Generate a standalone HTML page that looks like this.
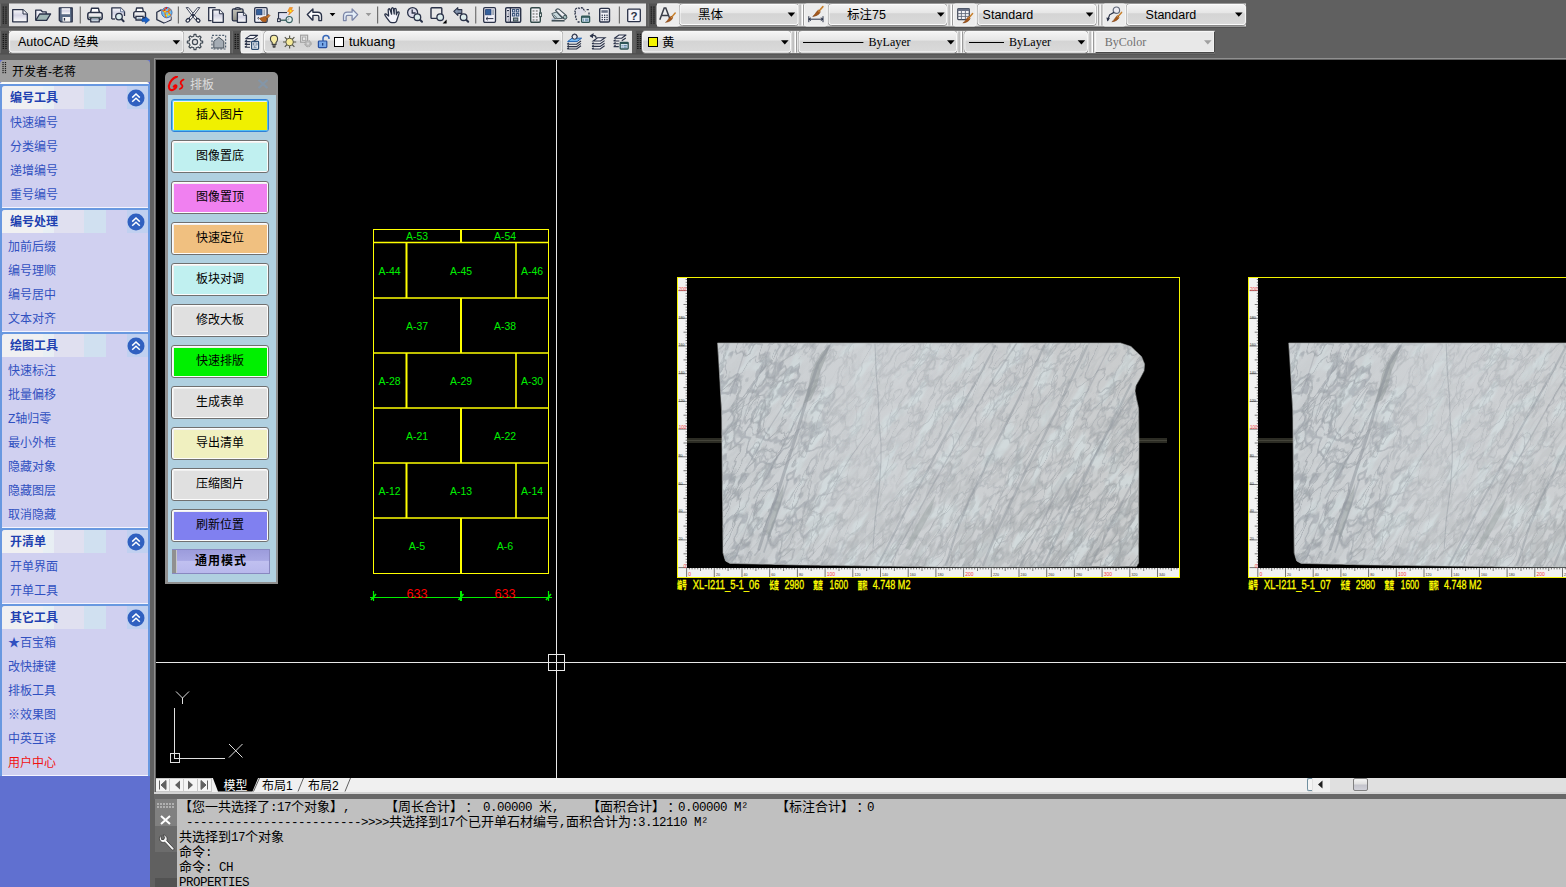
<!DOCTYPE html><html><head><meta charset="utf-8"><title>AutoCAD</title><style>
*{box-sizing:border-box;margin:0;padding:0}
html,body{width:1566px;height:887px;overflow:hidden}
body{background:#606060;font-family:"Liberation Sans","Noto Sans CJK SC",sans-serif;font-size:12px;color:#000;position:relative}
.abs{position:absolute}
#draw{position:absolute;left:156px;top:60px;width:1410px;height:718px;background:#000;overflow:hidden}
#lp{position:absolute;left:0;top:60px;width:150px;height:827px;background:#6070d0}
#lpt{position:absolute;left:0;top:0;width:150px;height:22px;background:#a0a0a0;border-radius:4px 4px 0 0}
#lpw{position:absolute;left:0;top:22px;width:149px;height:2px;background:#fcfcf8;border-radius:3px 3px 0 0}
#lpf{position:absolute;left:0;top:24px;width:150px;height:692px;background:#6898e0}
.grp{position:absolute;left:2px;width:146px;background:#d0d0f0;border-bottom:1px solid #f4f4ff;border-radius:3px 0 0 0;overflow:hidden}
.gh{position:absolute;left:0;top:0;width:146px;height:23px;background:linear-gradient(90deg,#f0f0f2 0,#f0f0f2 28%,#e8f0f4 28%,#e8eef4 35.5%,#e0e0f0 35.5%,#e0e0f0 56.5%,#d0e0f0 56.5%,#d0e0f0 71.5%,#d0d0f0 71.5%,#d0d0f0 85.6%,#c0d0f0 85.6%);}
.gt{position:absolute;left:8px;top:4px;font-weight:bold;color:#2040b0;font-size:12px;line-height:16px;letter-spacing:0}
.it{position:absolute;color:#3050c0;font-size:12px;line-height:16px;white-space:nowrap}
.chev{position:absolute;left:124.5px;top:2.5px;width:18px;height:18px}
</style></head><body>
<div id="lp"><div id="lpt"></div><div id="lpw"></div><div id="lpf"></div>
<svg class="abs" style="left:2px;top:2px" width="5" height="13" viewBox="0 0 5 13"><rect x="0.4" y="0" width="1.3" height="1.2" fill="#202020"/><rect x="0.4" y="2" width="1.3" height="1.2" fill="#202020"/><rect x="0.4" y="4" width="1.3" height="1.2" fill="#202020"/><rect x="0.4" y="6" width="1.3" height="1.2" fill="#202020"/><rect x="0.4" y="8" width="1.3" height="1.2" fill="#202020"/><rect x="0.4" y="10" width="1.3" height="1.2" fill="#202020"/><rect x="2.8" y="0" width="1.3" height="1.2" fill="#202020"/><rect x="2.8" y="2" width="1.3" height="1.2" fill="#202020"/><rect x="2.8" y="4" width="1.3" height="1.2" fill="#202020"/><rect x="2.8" y="6" width="1.3" height="1.2" fill="#202020"/><rect x="2.8" y="8" width="1.3" height="1.2" fill="#202020"/><rect x="2.8" y="10" width="1.3" height="1.2" fill="#202020"/></svg>
<div class="abs" style="left:12px;top:4px;font-size:12px;line-height:16px;color:#000">开发者-老蒋</div>
<div class="grp" style="top:26px;height:122px"><div class="gh"></div><div class="gt">编号工具</div><svg class="chev" viewBox="0 0 18 18"><circle cx="9" cy="9" r="8.5" fill="#3060c0"/><path d="M5.2 8.6 L9 5 L12.8 8.6 M5.2 12.8 L9 9.2 L12.8 12.8" fill="none" stroke="#fff" stroke-width="1.5"/></svg>
<div class="it" style="left:8px;top:29px">快速编号</div>
<div class="it" style="left:8px;top:53px">分类编号</div>
<div class="it" style="left:8px;top:77px">递增编号</div>
<div class="it" style="left:8px;top:101px">重号编号</div>
</div>
<div class="grp" style="top:150px;height:122px"><div class="gh"></div><div class="gt">编号处理</div><svg class="chev" viewBox="0 0 18 18"><circle cx="9" cy="9" r="8.5" fill="#3060c0"/><path d="M5.2 8.6 L9 5 L12.8 8.6 M5.2 12.8 L9 9.2 L12.8 12.8" fill="none" stroke="#fff" stroke-width="1.5"/></svg>
<div class="it" style="left:6px;top:29px">加前后缀</div>
<div class="it" style="left:6px;top:53px">编号理顺</div>
<div class="it" style="left:6px;top:77px">编号居中</div>
<div class="it" style="left:6px;top:101px">文本对齐</div>
</div>
<div class="grp" style="top:274px;height:194px"><div class="gh"></div><div class="gt">绘图工具</div><svg class="chev" viewBox="0 0 18 18"><circle cx="9" cy="9" r="8.5" fill="#3060c0"/><path d="M5.2 8.6 L9 5 L12.8 8.6 M5.2 12.8 L9 9.2 L12.8 12.8" fill="none" stroke="#fff" stroke-width="1.5"/></svg>
<div class="it" style="left:6px;top:29px">快速标注</div>
<div class="it" style="left:6px;top:53px">批量偏移</div>
<div class="it" style="left:6px;top:77px">Z轴归零</div>
<div class="it" style="left:6px;top:101px">最小外框</div>
<div class="it" style="left:6px;top:125px">隐藏对象</div>
<div class="it" style="left:6px;top:149px">隐藏图层</div>
<div class="it" style="left:6px;top:173px">取消隐藏</div>
</div>
<div class="grp" style="top:470px;height:74px"><div class="gh"></div><div class="gt">开清单</div><svg class="chev" viewBox="0 0 18 18"><circle cx="9" cy="9" r="8.5" fill="#3060c0"/><path d="M5.2 8.6 L9 5 L12.8 8.6 M5.2 12.8 L9 9.2 L12.8 12.8" fill="none" stroke="#fff" stroke-width="1.5"/></svg>
<div class="it" style="left:8px;top:29px">开单界面</div>
<div class="it" style="left:8px;top:53px">开单工具</div>
</div>
<div class="grp" style="top:546px;height:170px"><div class="gh"></div><div class="gt">其它工具</div><svg class="chev" viewBox="0 0 18 18"><circle cx="9" cy="9" r="8.5" fill="#3060c0"/><path d="M5.2 8.6 L9 5 L12.8 8.6 M5.2 12.8 L9 9.2 L12.8 12.8" fill="none" stroke="#fff" stroke-width="1.5"/></svg>
<div class="it" style="left:6px;top:29px">★百宝箱</div>
<div class="it" style="left:6px;top:53px">改快捷键</div>
<div class="it" style="left:6px;top:77px">排板工具</div>
<div class="it" style="left:6px;top:101px">※效果图</div>
<div class="it" style="left:6px;top:125px">中英互译</div>
<div class="it" style="left:6px;top:149px;color:#f01010">用户中心</div>
</div>
</div>
<div class="abs" style="left:154px;top:58px;width:1412px;height:1px;background:#909090"></div>
<div class="abs" style="left:154px;top:58px;width:1px;height:736px;background:#909090"></div>
<div id="draw">
<svg class="abs" style="left:0;top:0" width="1410" height="718" viewBox="156 60 1410 718" shape-rendering="crispEdges" font-family="'Liberation Sans','Noto Sans CJK SC',sans-serif">
<g shape-rendering="auto"><rect x="373.5" y="229.5" width="175.0" height="344.0" fill="none" stroke="#ffff00" stroke-width="1"/><line x1="373.5" y1="242.5" x2="548.5" y2="242.5" stroke="#ffff00" stroke-width="1.4"/><line x1="373.5" y1="298" x2="548.5" y2="298" stroke="#ffff00" stroke-width="1.4"/><line x1="373.5" y1="353" x2="548.5" y2="353" stroke="#ffff00" stroke-width="1.4"/><line x1="373.5" y1="408" x2="548.5" y2="408" stroke="#ffff00" stroke-width="1.4"/><line x1="373.5" y1="463" x2="548.5" y2="463" stroke="#ffff00" stroke-width="1.4"/><line x1="373.5" y1="518" x2="548.5" y2="518" stroke="#ffff00" stroke-width="1.4"/><line x1="461" y1="229.5" x2="461" y2="242.5" stroke="#ffff00" stroke-width="2"/><line x1="406.5" y1="242.5" x2="406.5" y2="298" stroke="#ffff00" stroke-width="2"/><line x1="516" y1="242.5" x2="516" y2="298" stroke="#ffff00" stroke-width="1.6"/><line x1="461" y1="298" x2="461" y2="353" stroke="#ffff00" stroke-width="2"/><line x1="406.5" y1="353" x2="406.5" y2="408" stroke="#ffff00" stroke-width="2"/><line x1="516" y1="353" x2="516" y2="408" stroke="#ffff00" stroke-width="1.6"/><line x1="461" y1="408" x2="461" y2="463" stroke="#ffff00" stroke-width="2"/><line x1="406.5" y1="463" x2="406.5" y2="518" stroke="#ffff00" stroke-width="2"/><line x1="516" y1="463" x2="516" y2="518" stroke="#ffff00" stroke-width="1.6"/><line x1="461" y1="518" x2="461" y2="573.5" stroke="#ffff00" stroke-width="2"/></g>
<text x="417" y="240" fill="#00f000" font-size="11" text-anchor="middle" textLength="22.0" lengthAdjust="spacingAndGlyphs">A-53</text>
<text x="505" y="240" fill="#00f000" font-size="11" text-anchor="middle" textLength="22.0" lengthAdjust="spacingAndGlyphs">A-54</text>
<text x="389.5" y="274.5" fill="#00f000" font-size="11" text-anchor="middle" textLength="22.0" lengthAdjust="spacingAndGlyphs">A-44</text>
<text x="461" y="274.5" fill="#00f000" font-size="11" text-anchor="middle" textLength="22.0" lengthAdjust="spacingAndGlyphs">A-45</text>
<text x="532" y="274.5" fill="#00f000" font-size="11" text-anchor="middle" textLength="22.0" lengthAdjust="spacingAndGlyphs">A-46</text>
<text x="417" y="330" fill="#00f000" font-size="11" text-anchor="middle" textLength="22.0" lengthAdjust="spacingAndGlyphs">A-37</text>
<text x="505" y="330" fill="#00f000" font-size="11" text-anchor="middle" textLength="22.0" lengthAdjust="spacingAndGlyphs">A-38</text>
<text x="389.5" y="385" fill="#00f000" font-size="11" text-anchor="middle" textLength="22.0" lengthAdjust="spacingAndGlyphs">A-28</text>
<text x="461" y="385" fill="#00f000" font-size="11" text-anchor="middle" textLength="22.0" lengthAdjust="spacingAndGlyphs">A-29</text>
<text x="532" y="385" fill="#00f000" font-size="11" text-anchor="middle" textLength="22.0" lengthAdjust="spacingAndGlyphs">A-30</text>
<text x="417" y="440" fill="#00f000" font-size="11" text-anchor="middle" textLength="22.0" lengthAdjust="spacingAndGlyphs">A-21</text>
<text x="505" y="440" fill="#00f000" font-size="11" text-anchor="middle" textLength="22.0" lengthAdjust="spacingAndGlyphs">A-22</text>
<text x="389.5" y="495" fill="#00f000" font-size="11" text-anchor="middle" textLength="22.0" lengthAdjust="spacingAndGlyphs">A-12</text>
<text x="461" y="495" fill="#00f000" font-size="11" text-anchor="middle" textLength="22.0" lengthAdjust="spacingAndGlyphs">A-13</text>
<text x="532" y="495" fill="#00f000" font-size="11" text-anchor="middle" textLength="22.0" lengthAdjust="spacingAndGlyphs">A-14</text>
<text x="417" y="550" fill="#00f000" font-size="11" text-anchor="middle" textLength="16.5" lengthAdjust="spacingAndGlyphs">A-5</text>
<text x="505" y="550" fill="#00f000" font-size="11" text-anchor="middle" textLength="16.5" lengthAdjust="spacingAndGlyphs">A-6</text>
<g shape-rendering="auto" stroke="#00f000" fill="none" stroke-width="1.2"><line x1="370" y1="597.5" x2="552" y2="597.5" shape-rendering="crispEdges" stroke-width="1"/><line x1="373.5" y1="591" x2="373.5" y2="601"/><line x1="548.5" y1="591" x2="548.5" y2="601"/><path d="M371 600 L376 594 M546 600 L551 594 M458.5 600 L463.5 594" stroke-width="1.6"/><line x1="461" y1="591" x2="461" y2="601" stroke-width="2"/></g>
<text x="417" y="598" fill="#ff0000" font-size="13" text-anchor="middle" textLength="21" lengthAdjust="spacingAndGlyphs">633</text>
<text x="505" y="598" fill="#ff0000" font-size="13" text-anchor="middle" textLength="21" lengthAdjust="spacingAndGlyphs">633</text>
<g stroke="#e8e8e8" stroke-width="1" fill="none"><line x1="556.5" y1="60" x2="556.5" y2="778"/><line x1="156" y1="662.5" x2="1566" y2="662.5"/><rect x="548.5" y="654.5" width="16" height="16"/></g>
<g stroke="#e0e0e0" stroke-width="1" fill="none"><line x1="174.5" y1="708" x2="174.5" y2="758"/><line x1="174" y1="758.5" x2="225" y2="758.5"/><rect x="170.5" y="753.5" width="9" height="9"/><g shape-rendering="auto"><path d="M176 691.5 L182.5 698 L189 691.5 M182.5 698 L182.5 704"/><path d="M229 744 L242.5 757.5 M242.5 744 L229 757.5"/></g></g>
<defs>
<clipPath id="slabclip"><polygon points="717.5,343 1120.5,343 1131,346.5 1141.5,356.5 1144.6,364 1144,371 1140,378.5 1136,385.5 1135,391 1136.5,399 1138.6,408 1139,440 1138.6,563 1136.5,566.6 1000,567.2 940,567 800,565 730,563.4 725.5,561 723,553 722,450 721.6,412 719.6,375"/></clipPath>
<filter id="fcrack" x="0" y="0" width="100%" height="100%" color-interpolation-filters="sRGB"><feTurbulence type="fractalNoise" baseFrequency="0.022 0.06" numOctaves="4" seed="4"/><feColorMatrix type="matrix" values="0 0 0 0 0.573  0 0 0 0 0.596  0 0 0 0 0.620  1 0 0 0 0"/><feComponentTransfer><feFuncA type="table" tableValues="0 0 0 0 0 0 0 0 0 0 0 0.85 0 0 0 0 0 0 0 0 0 0 0 0"/></feComponentTransfer></filter>
<filter id="fcrack2" x="0" y="0" width="100%" height="100%" color-interpolation-filters="sRGB"><feTurbulence type="fractalNoise" baseFrequency="0.028 0.075" numOctaves="4" seed="9"/><feColorMatrix type="matrix" values="0 0 0 0 0.588  0 0 0 0 0.616  0 0 0 0 0.639  1 0 0 0 0"/><feComponentTransfer><feFuncA type="table" tableValues="0 0 0 0 0 0 0 0 0 0 0.75 0 0 0 0 0 0 0 0 0 0 0 0 0"/></feComponentTransfer></filter>
<filter id="fcrack3" x="0" y="0" width="100%" height="100%" color-interpolation-filters="sRGB"><feTurbulence type="fractalNoise" baseFrequency="0.03 0.06" numOctaves="3" seed="33"/><feColorMatrix type="matrix" values="0 0 0 0 0.620  0 0 0 0 0.643  0 0 0 0 0.667  1 0 0 0 0"/><feComponentTransfer><feFuncA type="table" tableValues="0 0 0 0 0 0 0 0 0 0 0 0 0 0.7 0.7 0 0 0 0 0 0 0 0 0"/></feComponentTransfer></filter>
<filter id="fband" x="0" y="0" width="100%" height="100%" color-interpolation-filters="sRGB"><feTurbulence type="fractalNoise" baseFrequency="0.022 0.075" numOctaves="3" seed="3"/><feColorMatrix type="matrix" values="0 0 0 0 0.675  0 0 0 0 0.690  0 0 0 0 0.698  1 0 0 0 0"/><feComponentTransfer><feFuncA type="table" tableValues="0 0 0 0 0 0 0 0 0 0 0 0 0.2 0.6 0.6 0.55 0.2 0 0 0 0 0 0 0"/></feComponentTransfer></filter>
<filter id="fband2" x="0" y="0" width="100%" height="100%" color-interpolation-filters="sRGB"><feTurbulence type="fractalNoise" baseFrequency="0.028 0.095" numOctaves="3" seed="21"/><feColorMatrix type="matrix" values="0 0 0 0 0.580  0 0 0 0 0.600  0 0 0 0 0.612  1 0 0 0 0"/><feComponentTransfer><feFuncA type="table" tableValues="0 0 0 0 0 0 0 0 0 0.6 0.5 0 0 0 0 0 0 0 0 0 0 0 0"/></feComponentTransfer></filter>
<filter id="flight" x="0" y="0" width="100%" height="100%" color-interpolation-filters="sRGB"><feTurbulence type="fractalNoise" baseFrequency="0.024 0.07" numOctaves="3" seed="15"/><feColorMatrix type="matrix" values="0 0 0 0 0.839  0 0 0 0 0.886  0 0 0 0 0.894  1 0 0 0 0"/><feComponentTransfer><feFuncA type="table" tableValues="0 0 0 0 0 0 0 0.2 0.5 0.6 0.6 0.6 0.6"/></feComponentTransfer></filter>
<linearGradient id="dens3" x1="0" y1="0" x2="1" y2="0"><stop offset="0" stop-color="#fff" stop-opacity="0.9"/><stop offset="0.22" stop-color="#fff" stop-opacity="0.8"/><stop offset="0.36" stop-color="#fff" stop-opacity="0.1"/><stop offset="1" stop-color="#fff" stop-opacity="0"/></linearGradient>
<mask id="densm3" maskUnits="userSpaceOnUse" x="700" y="330" width="460" height="250"><rect x="700" y="330" width="460" height="250" fill="url(#dens3)"/></mask>
<linearGradient id="dens" x1="0.15" y1="0" x2="0.9" y2="1"><stop offset="0" stop-color="#fff" stop-opacity="0.06"/><stop offset="0.4" stop-color="#fff" stop-opacity="0.14"/><stop offset="0.65" stop-color="#fff" stop-opacity="0.5"/><stop offset="1" stop-color="#fff" stop-opacity="0.95"/></linearGradient>
<mask id="densm" maskUnits="userSpaceOnUse" x="700" y="330" width="460" height="250"><rect x="700" y="330" width="460" height="250" fill="url(#dens)"/></mask>
<linearGradient id="dens2" x1="0" y1="0" x2="1" y2="0"><stop offset="0" stop-color="#fff" stop-opacity="0.75"/><stop offset="0.2" stop-color="#fff" stop-opacity="0.6"/><stop offset="0.32" stop-color="#fff" stop-opacity="0.25"/><stop offset="0.5" stop-color="#fff" stop-opacity="0.4"/><stop offset="1" stop-color="#fff" stop-opacity="0.6"/></linearGradient>
<mask id="densm2" maskUnits="userSpaceOnUse" x="700" y="330" width="460" height="250"><rect x="700" y="330" width="460" height="250" fill="url(#dens2)"/></mask>
<linearGradient id="slabg" x1="0" y1="0" x2="1" y2="0"><stop offset="0" stop-color="#ccd0d3"/><stop offset="0.45" stop-color="#ced1d4"/><stop offset="1" stop-color="#cacccd"/></linearGradient>
</defs>
<g id="slab1">
<rect x="678" y="278" width="9" height="290" fill="#f2f2f2"/>
<rect x="678" y="568" width="501.5" height="9.5" fill="#f2f2f2"/>
<path d="M678.5 567.6 H687 M685.6 564.8 H687 M685.6 562.1 H687 M685.6 559.3 H687 M685.6 556.5 H687 M683.5 553.8 H687 M685.6 551.0 H687 M685.6 548.2 H687 M685.6 545.4 H687 M685.6 542.7 H687 M678.5 539.9 H687 M685.6 537.1 H687 M685.6 534.4 H687 M685.6 531.6 H687 M685.6 528.8 H687 M683.5 526.1 H687 M685.6 523.3 H687 M685.6 520.5 H687 M685.6 517.7 H687 M685.6 515.0 H687 M678.5 512.2 H687 M685.6 509.4 H687 M685.6 506.7 H687 M685.6 503.9 H687 M685.6 501.1 H687 M683.5 498.4 H687 M685.6 495.6 H687 M685.6 492.8 H687 M685.6 490.0 H687 M685.6 487.3 H687 M678.5 484.5 H687 M685.6 481.7 H687 M685.6 479.0 H687 M685.6 476.2 H687 M685.6 473.4 H687 M683.5 470.7 H687 M685.6 467.9 H687 M685.6 465.1 H687 M685.6 462.3 H687 M685.6 459.6 H687 M678.5 456.8 H687 M685.6 454.0 H687 M685.6 451.3 H687 M685.6 448.5 H687 M685.6 445.7 H687 M683.5 443.0 H687 M685.6 440.2 H687 M685.6 437.4 H687 M685.6 434.6 H687 M685.6 431.9 H687 M678.5 429.1 H687 M685.6 426.3 H687 M685.6 423.6 H687 M685.6 420.8 H687 M685.6 418.0 H687 M683.5 415.2 H687 M685.6 412.5 H687 M685.6 409.7 H687 M685.6 406.9 H687 M685.6 404.2 H687 M678.5 401.4 H687 M685.6 398.6 H687 M685.6 395.9 H687 M685.6 393.1 H687 M685.6 390.3 H687 M683.5 387.6 H687 M685.6 384.8 H687 M685.6 382.0 H687 M685.6 379.2 H687 M685.6 376.5 H687 M678.5 373.7 H687 M685.6 370.9 H687 M685.6 368.2 H687 M685.6 365.4 H687 M685.6 362.6 H687 M683.5 359.9 H687 M685.6 357.1 H687 M685.6 354.3 H687 M685.6 351.5 H687 M685.6 348.8 H687 M678.5 346.0 H687 M685.6 343.2 H687 M685.6 340.5 H687 M685.6 337.7 H687 M685.6 334.9 H687 M683.5 332.2 H687 M685.6 329.4 H687 M685.6 326.6 H687 M685.6 323.8 H687 M685.6 321.1 H687 M678.5 318.3 H687 M685.6 315.5 H687 M685.6 312.8 H687 M685.6 310.0 H687 M685.6 307.2 H687 M683.5 304.5 H687 M685.6 301.7 H687 M685.6 298.9 H687 M685.6 296.1 H687 M685.6 293.4 H687 M678.5 290.6 H687 M685.6 287.8 H687 M685.6 285.1 H687 M685.6 282.3 H687 M685.6 279.5 H687 M686.6 568 V577 M689.4 568 V569.4 M692.1 568 V569.4 M694.9 568 V569.4 M697.7 568 V569.4 M700.5 568 V571 M703.2 568 V569.4 M706.0 568 V569.4 M708.8 568 V569.4 M711.5 568 V569.4 M714.3 568 V577 M717.1 568 V569.4 M719.8 568 V569.4 M722.6 568 V569.4 M725.4 568 V569.4 M728.1 568 V571 M730.9 568 V569.4 M733.7 568 V569.4 M736.5 568 V569.4 M739.2 568 V569.4 M742.0 568 V577 M744.8 568 V569.4 M747.5 568 V569.4 M750.3 568 V569.4 M753.1 568 V569.4 M755.9 568 V571 M758.6 568 V569.4 M761.4 568 V569.4 M764.2 568 V569.4 M766.9 568 V569.4 M769.7 568 V577 M772.5 568 V569.4 M775.2 568 V569.4 M778.0 568 V569.4 M780.8 568 V569.4 M783.6 568 V571 M786.3 568 V569.4 M789.1 568 V569.4 M791.9 568 V569.4 M794.6 568 V569.4 M797.4 568 V577 M800.2 568 V569.4 M802.9 568 V569.4 M805.7 568 V569.4 M808.5 568 V569.4 M811.2 568 V571 M814.0 568 V569.4 M816.8 568 V569.4 M819.6 568 V569.4 M822.3 568 V569.4 M825.1 568 V577 M827.9 568 V569.4 M830.6 568 V569.4 M833.4 568 V569.4 M836.2 568 V569.4 M839.0 568 V571 M841.7 568 V569.4 M844.5 568 V569.4 M847.3 568 V569.4 M850.0 568 V569.4 M852.8 568 V577 M855.6 568 V569.4 M858.3 568 V569.4 M861.1 568 V569.4 M863.9 568 V569.4 M866.7 568 V571 M869.4 568 V569.4 M872.2 568 V569.4 M875.0 568 V569.4 M877.7 568 V569.4 M880.5 568 V577 M883.3 568 V569.4 M886.0 568 V569.4 M888.8 568 V569.4 M891.6 568 V569.4 M894.4 568 V571 M897.1 568 V569.4 M899.9 568 V569.4 M902.7 568 V569.4 M905.4 568 V569.4 M908.2 568 V577 M911.0 568 V569.4 M913.7 568 V569.4 M916.5 568 V569.4 M919.3 568 V569.4 M922.0 568 V571 M924.8 568 V569.4 M927.6 568 V569.4 M930.4 568 V569.4 M933.1 568 V569.4 M935.9 568 V577 M938.7 568 V569.4 M941.4 568 V569.4 M944.2 568 V569.4 M947.0 568 V569.4 M949.8 568 V571 M952.5 568 V569.4 M955.3 568 V569.4 M958.1 568 V569.4 M960.8 568 V569.4 M963.6 568 V577 M966.4 568 V569.4 M969.1 568 V569.4 M971.9 568 V569.4 M974.7 568 V569.4 M977.5 568 V571 M980.2 568 V569.4 M983.0 568 V569.4 M985.8 568 V569.4 M988.5 568 V569.4 M991.3 568 V577 M994.1 568 V569.4 M996.8 568 V569.4 M999.6 568 V569.4 M1002.4 568 V569.4 M1005.2 568 V571 M1007.9 568 V569.4 M1010.7 568 V569.4 M1013.5 568 V569.4 M1016.2 568 V569.4 M1019.0 568 V577 M1021.8 568 V569.4 M1024.5 568 V569.4 M1027.3 568 V569.4 M1030.1 568 V569.4 M1032.8 568 V571 M1035.6 568 V569.4 M1038.4 568 V569.4 M1041.2 568 V569.4 M1043.9 568 V569.4 M1046.7 568 V577 M1049.5 568 V569.4 M1052.2 568 V569.4 M1055.0 568 V569.4 M1057.8 568 V569.4 M1060.5 568 V571 M1063.3 568 V569.4 M1066.1 568 V569.4 M1068.9 568 V569.4 M1071.6 568 V569.4 M1074.4 568 V577 M1077.2 568 V569.4 M1079.9 568 V569.4 M1082.7 568 V569.4 M1085.5 568 V569.4 M1088.2 568 V571 M1091.0 568 V569.4 M1093.8 568 V569.4 M1096.6 568 V569.4 M1099.3 568 V569.4 M1102.1 568 V577 M1104.9 568 V569.4 M1107.6 568 V569.4 M1110.4 568 V569.4 M1113.2 568 V569.4 M1116.0 568 V571 M1118.7 568 V569.4 M1121.5 568 V569.4 M1124.3 568 V569.4 M1127.0 568 V569.4 M1129.8 568 V577 M1132.6 568 V569.4 M1135.3 568 V569.4 M1138.1 568 V569.4 M1140.9 568 V569.4 M1143.7 568 V571 M1146.4 568 V569.4 M1149.2 568 V569.4 M1152.0 568 V569.4 M1154.7 568 V569.4 M1157.5 568 V577 M1160.3 568 V569.4 M1163.0 568 V569.4 M1165.8 568 V569.4 M1168.6 568 V569.4 M1171.3 568 V571 M1174.1 568 V569.4 M1176.9 568 V569.4" stroke="#404040" stroke-width="0.7" fill="none" shape-rendering="auto"/>
<text x="688.2" y="576.4" font-size="5" fill="#f04040">0</text>
<text x="715.9" y="576.4" font-size="3.6" fill="#303030">20</text>
<text x="743.6" y="576.4" font-size="3.6" fill="#303030">40</text>
<text x="771.3" y="576.4" font-size="3.6" fill="#303030">60</text>
<text x="799.0" y="576.4" font-size="3.6" fill="#303030">80</text>
<text x="826.7" y="576.4" font-size="5" fill="#f04040">100</text>
<text x="854.4" y="576.4" font-size="3.6" fill="#303030">120</text>
<text x="882.1" y="576.4" font-size="3.6" fill="#303030">140</text>
<text x="909.8" y="576.4" font-size="3.6" fill="#303030">160</text>
<text x="937.5" y="576.4" font-size="3.6" fill="#303030">180</text>
<text x="965.2" y="576.4" font-size="5" fill="#f04040">200</text>
<text x="992.9" y="576.4" font-size="3.6" fill="#303030">220</text>
<text x="1020.6" y="576.4" font-size="3.6" fill="#303030">240</text>
<text x="1048.3" y="576.4" font-size="3.6" fill="#303030">260</text>
<text x="1076.0" y="576.4" font-size="3.6" fill="#303030">280</text>
<text x="1103.7" y="576.4" font-size="5" fill="#f04040">300</text>
<text x="1131.4" y="576.4" font-size="3.6" fill="#303030">320</text>
<text x="1159.1" y="576.4" font-size="3.6" fill="#303030">340</text>
<text x="686.4" y="567.8" text-anchor="end" font-size="5" fill="#f04040" textLength="2.8" lengthAdjust="spacingAndGlyphs">0</text>
<text x="678.6" y="540.1" font-size="3.6" fill="#303030">20</text>
<text x="678.6" y="512.4" font-size="3.6" fill="#303030">40</text>
<text x="678.6" y="484.7" font-size="3.6" fill="#303030">60</text>
<text x="678.6" y="457.0" font-size="3.6" fill="#303030">80</text>
<text x="686.4" y="429.3" text-anchor="end" font-size="5" fill="#f04040" textLength="7.6" lengthAdjust="spacingAndGlyphs">100</text>
<text x="678.6" y="401.6" font-size="3.6" fill="#303030">120</text>
<text x="678.6" y="373.9" font-size="3.6" fill="#303030">140</text>
<text x="678.6" y="346.2" font-size="3.6" fill="#303030">160</text>
<text x="678.6" y="318.5" font-size="3.6" fill="#303030">180</text>
<text x="686.4" y="290.8" text-anchor="end" font-size="5" fill="#f04040" textLength="7.6" lengthAdjust="spacingAndGlyphs">200</text>
<rect x="687" y="438" width="480" height="5.4" fill="#2c2c24"/><rect x="687" y="439.6" width="480" height="1.4" fill="#44443a"/>
<g clip-path="url(#slabclip)" shape-rendering="auto">
<polygon points="717.5,343 1120.5,343 1131,346.5 1141.5,356.5 1144.6,364 1144,371 1140,378.5 1136,385.5 1135,391 1136.5,399 1138.6,408 1139,440 1138.6,563 1136.5,566.6 1000,567.2 940,567 800,565 730,563.4 725.5,561 723,553 722,450 721.6,412 719.6,375" fill="url(#slabg)"/>
<g transform="rotate(-55 930 455)"><rect x="500" y="0" width="900" height="900" filter="url(#flight)"/></g>
<g mask="url(#densm2)"><g transform="rotate(-54 930 455)"><rect x="500" y="0" width="900" height="900" filter="url(#fcrack)"/></g><g transform="rotate(-60 930 455)"><rect x="500" y="0" width="900" height="900" filter="url(#fcrack2)"/></g></g>
<g mask="url(#densm3)"><g transform="rotate(-58 930 455)"><rect x="500" y="0" width="900" height="900" filter="url(#fcrack3)"/></g></g>
<g mask="url(#densm)"><g transform="rotate(-54 930 455)"><rect x="500" y="0" width="900" height="900" filter="url(#fband)"/></g><g transform="rotate(-57 930 455)"><rect x="500" y="0" width="900" height="900" filter="url(#fband2)"/></g></g>
<path d="M803 404 L808 388 L811 374 L816 362 L822 352 L829 346 L826 358 L820 372 L817 386 L811 400 Z" fill="#959d9d" opacity="0.55"/>
<path d="M766 532 L772 514 L778 497 L784 484 L782 500 L776 518 L770 536 Z" fill="#9aa2a2" opacity="0.5"/>
<path d="M905 548 L915 528 L928 506 L936 494 L931 512 L920 532 L910 550 Z" fill="#9aa2a2" opacity="0.45"/>
<path d="M759 549 L768 521 L777 495 L786 467 L795 439 L803 412 L810 388 L818 364 L829 346" fill="none" stroke="#8a9098" stroke-width="3.0" opacity="0.5" stroke-linecap="round" stroke-linejoin="round"/>
<path d="M764 552 L772 528 L779 508 L788 480" fill="none" stroke="#8a9098" stroke-width="1.8" opacity="0.38" stroke-linecap="round" stroke-linejoin="round"/>
<path d="M873 548 L875 520 L879 490 L881 462 L881 444 L879 420 L878 395 L876 370 L875 344" fill="none" stroke="#8a9098" stroke-width="1.1" opacity="0.4" stroke-linecap="round" stroke-linejoin="round"/>
<path d="M891 562 L906 535 L922 505 L940 472 L958 440 L975 410 L994 378 L1016 344" fill="none" stroke="#8a9098" stroke-width="1.5" opacity="0.36" stroke-linecap="round" stroke-linejoin="round"/>
<path d="M1044 346 L1030 376 L1014 408 L998 440 L984 470 L970 498 L957 530 L946 565" fill="none" stroke="#8a9098" stroke-width="2.2" opacity="0.4" stroke-linecap="round" stroke-linejoin="round"/>
<path d="M1087 346 L1072 378 L1058 408 L1042 440 L1030 462 L1012 500 L996 534 L983 565" fill="none" stroke="#8a9098" stroke-width="2.4" opacity="0.4" stroke-linecap="round" stroke-linejoin="round"/>
<path d="M1131 384 L1118 410 L1104 438 L1092 462 L1078 492 L1064 522 L1044 565" fill="none" stroke="#8a9098" stroke-width="2.2" opacity="0.4" stroke-linecap="round" stroke-linejoin="round"/>
<path d="M995 346 L978 378 L960 410 L942 442 L928 470 L910 502 L894 534 L878 565" fill="none" stroke="#8a9098" stroke-width="2.0" opacity="0.38" stroke-linecap="round" stroke-linejoin="round"/>
<path d="M1110 346 L1096 374 L1084 398" fill="none" stroke="#8a9098" stroke-width="1.4" opacity="0.32" stroke-linecap="round" stroke-linejoin="round"/>
<path d="M1060 520 L1080 482 L1100 446 L1120 412 L1136 392" fill="none" stroke="#8a9098" stroke-width="1.6" opacity="0.34" stroke-linecap="round" stroke-linejoin="round"/>
<path d="M1020 566 L1036 534 L1050 506 L1066 478" fill="none" stroke="#8a9098" stroke-width="1.8" opacity="0.36" stroke-linecap="round" stroke-linejoin="round"/>
<path d="M1090 566 L1104 538 L1118 510 L1134 480" fill="none" stroke="#8a9098" stroke-width="1.8" opacity="0.36" stroke-linecap="round" stroke-linejoin="round"/>
<path d="M804 404 L792 428 L780 452 L766 478 L754 498" fill="none" stroke="#8a9098" stroke-width="1.6" opacity="0.36" stroke-linecap="round" stroke-linejoin="round"/>
<path d="M745 350 L738 372 L730 396" fill="none" stroke="#8a9098" stroke-width="1.2" opacity="0.3" stroke-linecap="round" stroke-linejoin="round"/>
<path d="M770 346 L760 372 L750 400 L742 424" fill="none" stroke="#8a9098" stroke-width="1.2" opacity="0.3" stroke-linecap="round" stroke-linejoin="round"/>
<path d="M745 470 L756 452 L768 430 L782 408 L796 388" fill="none" stroke="#8a9098" stroke-width="1.2" opacity="0.33" stroke-linecap="round" stroke-linejoin="round"/>
<path d="M728 420 L740 402 L752 384 L766 366" fill="none" stroke="#8a9098" stroke-width="1.0" opacity="0.33" stroke-linecap="round" stroke-linejoin="round"/>
<path d="M735 560 L742 540 L750 518 L757 500" fill="none" stroke="#8a9098" stroke-width="1.0" opacity="0.3" stroke-linecap="round" stroke-linejoin="round"/>
<path d="M824 500 L838 478 L852 455 L870 430" fill="none" stroke="#8a9098" stroke-width="1.0" opacity="0.3" stroke-linecap="round" stroke-linejoin="round"/>
</g>
<polygon points="717.5,343 1120.5,343 1131,346.5 1141.5,356.5 1144.6,364 1144,371 1140,378.5 1136,385.5 1135,391 1136.5,399 1138.6,408 1139,440 1138.6,563 1136.5,566.6 1000,567.2 940,567 800,565 730,563.4 725.5,561 723,553 722,450 721.6,412 719.6,375" fill="none" stroke="#a8acac" stroke-width="1" opacity="0.6" shape-rendering="auto"/>
<rect x="677.5" y="277.5" width="502" height="300" fill="none" stroke="#f4f400" stroke-width="1"/>
</g>
<use href="#slab1" x="571.2" y="0"/>
<g shape-rendering="auto"><text x="677.2" y="588.6" font-size="10" fill="#fcfc00" stroke="#fcfc00" stroke-width="0.3" lengthAdjust="spacingAndGlyphs" font-weight="bold" textLength="9.5">编号</text><text x="692.8000000000001" y="589.2" font-size="13" fill="#fcfc00" stroke="#fcfc00" stroke-width="0.35" lengthAdjust="spacingAndGlyphs" textLength="66.6">XL-I211_5-1_06</text><text x="769.2" y="588.6" font-size="10" fill="#fcfc00" stroke="#fcfc00" stroke-width="0.3" lengthAdjust="spacingAndGlyphs" font-weight="bold" textLength="9.5">长度</text><text x="784.6" y="589.2" font-size="13" fill="#fcfc00" stroke="#fcfc00" stroke-width="0.35" lengthAdjust="spacingAndGlyphs" textLength="19.4">2980</text><text x="813.2" y="588.6" font-size="10" fill="#fcfc00" stroke="#fcfc00" stroke-width="0.3" lengthAdjust="spacingAndGlyphs" font-weight="bold" textLength="9.5">宽度</text><text x="829.6" y="589.2" font-size="13" fill="#fcfc00" stroke="#fcfc00" stroke-width="0.35" lengthAdjust="spacingAndGlyphs" textLength="18.4">1600</text><text x="857.8000000000001" y="588.6" font-size="10" fill="#fcfc00" stroke="#fcfc00" stroke-width="0.3" lengthAdjust="spacingAndGlyphs" font-weight="bold" textLength="9.5">面积</text><text x="872.8000000000001" y="589.2" font-size="13" fill="#fcfc00" stroke="#fcfc00" stroke-width="0.35" lengthAdjust="spacingAndGlyphs" textLength="37.6">4.748 M2</text><text x="1248.4" y="588.6" font-size="10" fill="#fcfc00" stroke="#fcfc00" stroke-width="0.3" lengthAdjust="spacingAndGlyphs" font-weight="bold" textLength="9.5">编号</text><text x="1264.0" y="589.2" font-size="13" fill="#fcfc00" stroke="#fcfc00" stroke-width="0.35" lengthAdjust="spacingAndGlyphs" textLength="66.6">XL-I211_5-1_07</text><text x="1340.4" y="588.6" font-size="10" fill="#fcfc00" stroke="#fcfc00" stroke-width="0.3" lengthAdjust="spacingAndGlyphs" font-weight="bold" textLength="9.5">长度</text><text x="1355.8000000000002" y="589.2" font-size="13" fill="#fcfc00" stroke="#fcfc00" stroke-width="0.35" lengthAdjust="spacingAndGlyphs" textLength="19.4">2980</text><text x="1384.4" y="588.6" font-size="10" fill="#fcfc00" stroke="#fcfc00" stroke-width="0.3" lengthAdjust="spacingAndGlyphs" font-weight="bold" textLength="9.5">宽度</text><text x="1400.8000000000002" y="589.2" font-size="13" fill="#fcfc00" stroke="#fcfc00" stroke-width="0.35" lengthAdjust="spacingAndGlyphs" textLength="18.4">1600</text><text x="1429.0" y="588.6" font-size="10" fill="#fcfc00" stroke="#fcfc00" stroke-width="0.3" lengthAdjust="spacingAndGlyphs" font-weight="bold" textLength="9.5">面积</text><text x="1444.0" y="589.2" font-size="13" fill="#fcfc00" stroke="#fcfc00" stroke-width="0.35" lengthAdjust="spacingAndGlyphs" textLength="37.6">4.748 M2</text></g>
</svg>
</div>
<div class="abs" style="left:165px;top:72px;width:113px;height:512px;background:#909090;border-radius:5px 5px 0 0"></div>
<div class="abs" style="left:167.5px;top:95px;width:108px;height:486.5px;background:#b0d0e0"></div>
<svg class="abs" style="left:167px;top:76px" width="20" height="16" viewBox="0 0 20 16"><path d="M10 0.6 C6.4 1.4 2.4 5.6 1.9 9.8 C1.6 13.4 4 15 6.4 13.6 C8.6 12.4 9.9 10.6 9.2 9.6 C8.6 8.9 7.4 9.6 6.8 10.6" fill="none" stroke="#f00000" stroke-width="2.1" stroke-linecap="round"/><path d="M16.6 3.6 C15 4.4 13.3 6.2 13.7 7.4 C14.1 8.6 15.7 9 15.5 10.4 C15.3 11.8 14 12.6 12.8 13" fill="none" stroke="#f00000" stroke-width="1.7" stroke-linecap="round"/></svg>
<div class="abs" style="left:190px;top:77px;font-size:12px;line-height:16px;color:#dcdcdc">排板</div>
<svg class="abs" style="left:257px;top:79px" width="12" height="10" viewBox="0 0 12 10"><path d="M1.5 1 L10.5 9 M10.5 1 L1.5 9" stroke="#8496a8" stroke-width="2.2" fill="none"/></svg>
<div class="abs" style="left:171px;top:99px;width:98px;height:33px;border-radius:3px;background:#f0f0f0;border:1px solid #3080d8;box-shadow:inset 0 0 0 1px #50c0f0"><div class="abs" style="left:1.5px;top:1.5px;right:1.5px;bottom:1.5px;background:#f0f000;text-align:center;font-size:12px;line-height:27px;color:#000">插入图片</div></div>
<div class="abs" style="left:171px;top:140px;width:98px;height:33px;border-radius:3px;background:#f0f0f0;border:1px solid #707070;box-shadow:inset 0 0 0 1px #fcfcfc"><div class="abs" style="left:1.5px;top:1.5px;right:1.5px;bottom:1.5px;background:#c0f0f0;text-align:center;font-size:12px;line-height:27px;color:#000">图像置底</div></div>
<div class="abs" style="left:171px;top:181px;width:98px;height:33px;border-radius:3px;background:#f0f0f0;border:1px solid #707070;box-shadow:inset 0 0 0 1px #fcfcfc"><div class="abs" style="left:1.5px;top:1.5px;right:1.5px;bottom:1.5px;background:#f080f0;text-align:center;font-size:12px;line-height:27px;color:#000">图像置顶</div></div>
<div class="abs" style="left:171px;top:222px;width:98px;height:33px;border-radius:3px;background:#f0f0f0;border:1px solid #707070;box-shadow:inset 0 0 0 1px #fcfcfc"><div class="abs" style="left:1.5px;top:1.5px;right:1.5px;bottom:1.5px;background:#f0c080;text-align:center;font-size:12px;line-height:27px;color:#000">快速定位</div></div>
<div class="abs" style="left:171px;top:263px;width:98px;height:33px;border-radius:3px;background:#f0f0f0;border:1px solid #707070;box-shadow:inset 0 0 0 1px #fcfcfc"><div class="abs" style="left:1.5px;top:1.5px;right:1.5px;bottom:1.5px;background:#c0f0f0;text-align:center;font-size:12px;line-height:27px;color:#000">板块对调</div></div>
<div class="abs" style="left:171px;top:304px;width:98px;height:33px;border-radius:3px;background:#f0f0f0;border:1px solid #707070;box-shadow:inset 0 0 0 1px #fcfcfc"><div class="abs" style="left:1.5px;top:1.5px;right:1.5px;bottom:1.5px;background:#e0e0e0;text-align:center;font-size:12px;line-height:27px;color:#000">修改大板</div></div>
<div class="abs" style="left:171px;top:345px;width:98px;height:33px;border-radius:3px;background:#f0f0f0;border:1px solid #707070;box-shadow:inset 0 0 0 1px #fcfcfc"><div class="abs" style="left:1.5px;top:1.5px;right:1.5px;bottom:1.5px;background:#00f000;text-align:center;font-size:12px;line-height:27px;color:#000">快速排版</div></div>
<div class="abs" style="left:171px;top:386px;width:98px;height:33px;border-radius:3px;background:#f0f0f0;border:1px solid #707070;box-shadow:inset 0 0 0 1px #fcfcfc"><div class="abs" style="left:1.5px;top:1.5px;right:1.5px;bottom:1.5px;background:#e0e0e0;text-align:center;font-size:12px;line-height:27px;color:#000">生成表单</div></div>
<div class="abs" style="left:171px;top:427px;width:98px;height:33px;border-radius:3px;background:#f0f0f0;border:1px solid #707070;box-shadow:inset 0 0 0 1px #fcfcfc"><div class="abs" style="left:1.5px;top:1.5px;right:1.5px;bottom:1.5px;background:#f0f0c0;text-align:center;font-size:12px;line-height:27px;color:#000">导出清单</div></div>
<div class="abs" style="left:171px;top:468px;width:98px;height:33px;border-radius:3px;background:#f0f0f0;border:1px solid #707070;box-shadow:inset 0 0 0 1px #fcfcfc"><div class="abs" style="left:1.5px;top:1.5px;right:1.5px;bottom:1.5px;background:#e0e0e0;text-align:center;font-size:12px;line-height:27px;color:#000">压缩图片</div></div>
<div class="abs" style="left:171px;top:509px;width:98px;height:33px;border-radius:3px;background:#f0f0f0;border:1px solid #707070;box-shadow:inset 0 0 0 1px #fcfcfc"><div class="abs" style="left:1.5px;top:1.5px;right:1.5px;bottom:1.5px;background:#8080f0;text-align:center;font-size:12px;line-height:27px;color:#000">刷新位置</div></div>
<div class="abs" style="left:172px;top:549px;width:98px;height:25px;background:linear-gradient(180deg,#9c9cdc 0,#a8a8e4 45%,#c0c0f0 50%,#b8b8ec 100%);border:1px solid #8888c0;text-align:center;font-weight:bold;font-size:12px;line-height:22px;letter-spacing:1px;color:#000">通用模式</div>
<div class="abs" style="left:172px;top:550px;width:5px;height:23px;background:#909090;border-right:1px solid #c8c8c8"></div>
<div class="abs" style="left:156px;top:778px;width:1410px;height:14px;background:#f0f0f0"></div>
<div class="abs" style="left:154px;top:792px;width:1412px;height:2px;background:#d4d4d4"></div>
<div class="abs" style="left:154px;top:794px;width:1412px;height:5px;background:#686868"></div>
<svg class="abs" style="left:156px;top:777px" width="200" height="15" viewBox="156 777 200 15"><rect x="155.5" y="778.5" width="14" height="13" fill="#f4f4f4" stroke="#c8c8c8"/><rect x="169.5" y="778.5" width="14" height="13" fill="#f4f4f4" stroke="#c8c8c8"/><rect x="183.5" y="778.5" width="14" height="13" fill="#f4f4f4" stroke="#c8c8c8"/><rect x="197.5" y="778.5" width="14" height="13" fill="#f4f4f4" stroke="#c8c8c8"/><path d="M159.5 780.5 V789.5 M166 780.5 L161 785 L166 789.5 Z" fill="#606060" stroke="#606060" stroke-width="1"/><path d="M180 780.5 L175 785 L180 789.5 Z" fill="#606060"/><path d="M188 780.5 L193 785 L188 789.5 Z" fill="#606060"/><path d="M207.5 780.5 V789.5 M201 780.5 L206 785 L201 789.5 Z" fill="#606060" stroke="#606060" stroke-width="1"/><path d="M212.5 777 L258.5 777 L252.5 791.5 L218 791.5 Z" fill="#000"/><path d="M259.5 778 L253.5 791.5 M303.5 778 L298 791.5 M350.5 778 L345 791.5" stroke="#606060" stroke-width="1" fill="none"/></svg>
<div class="abs" style="left:223.5px;top:778px;font-size:12px;line-height:16px;color:#fff">模型</div>
<div class="abs" style="left:262px;top:778px;font-size:12px;line-height:16px;color:#000">布局1</div>
<div class="abs" style="left:308px;top:778px;font-size:12px;line-height:16px;color:#000">布局2</div>
<div class="abs" style="left:1308px;top:778px;width:258px;height:14px;background:#e0e0e0"></div>
<div class="abs" style="left:1307px;top:778px;width:5px;height:13px;border:1px solid #7090a0;border-right:none;border-radius:2px 0 0 2px;background:#f4f4f4"></div>
<div class="abs" style="left:1313px;top:778px;width:17px;height:14px;background:#f0f0f0"></div>
<svg class="abs" style="left:1317px;top:780px" width="6" height="9" viewBox="0 0 6 9"><path d="M5.5 0.5 L1 4.5 L5.5 8.5 Z" fill="#202020"/></svg>
<div class="abs" style="left:1353px;top:778px;width:15px;height:13px;border:1px solid #808080;border-radius:2px;background:linear-gradient(180deg,#f4f4f4 0,#e0e0e0 45%,#c4c4cc 55%,#d0d0d8 100%)"></div>
<style>.cl{position:absolute;left:179px;height:15px;line-height:15px;white-space:pre;font-family:"Liberation Mono","Noto Sans CJK SC",monospace;font-size:12.5px;letter-spacing:-0.5px;color:#000}.cl .cj{font-size:13px;letter-spacing:0;font-family:"Noto Sans CJK SC",sans-serif}</style>
<div class="abs" style="left:156px;top:799px;width:1410px;height:88px;background:#c0c0c0"></div>
<div class="abs" style="left:155px;top:799px;width:22px;height:88px;background:#808080"></div>
<div class="abs" style="left:155px;top:826px;width:22px;height:26px;background:#6c6c6c"></div>
<div class="abs" style="left:155px;top:852px;width:22px;height:26px;background:#606060"></div>
<div class="abs" style="left:155px;top:878px;width:22px;height:9px;background:#525252"></div>
<div class="abs" style="left:157px;top:803px;width:18px;height:5px;background:repeating-linear-gradient(90deg,#b0b0b0 0,#b0b0b0 2px,transparent 2px,transparent 3px);-webkit-mask:repeating-linear-gradient(180deg,#000 0,#000 2px,transparent 2px,transparent 3px)"></div>
<svg class="abs" style="left:160px;top:815px" width="11" height="10" viewBox="0 0 11 10"><path d="M1 1 L10 9 M10 1 L1 9" stroke="#fff" stroke-width="2" fill="none"/></svg>
<svg class="abs" style="left:156.5px;top:832.5px" width="19" height="19" viewBox="0 0 16 16"><path d="M3.2 2.2 C1.8 3.4 1.6 5.6 3 7 C4 8 5.4 8.2 6.6 7.7 L12.6 14.2 C13.4 15 14.9 13.8 14.2 12.8 L8.2 6.4 C8.8 5.2 8.6 3.6 7.6 2.6 C6.9 1.9 5.9 1.6 5 1.7 L6.4 3.6 L5.8 5.4 L3.9 5.5 Z" fill="#f8f8f8" stroke="#383838" stroke-width="0.7"/></svg>
<svg class="abs" style="left:177px;top:799px" width="1389" height="88" viewBox="177 799 1389 88" font-family="'Liberation Mono',monospace" font-size="12.5" letter-spacing="-0.5" fill="#000" style="text-spacing-trim:space-all">
<text x="179" y="811" xml:space="preserve"><tspan x="179" font-family="'Noto Sans CJK SC',sans-serif" font-size="13" letter-spacing="0">【</tspan><tspan x="192" font-family="'Noto Sans CJK SC',sans-serif" font-size="13" letter-spacing="0">您</tspan><tspan x="205" font-family="'Noto Sans CJK SC',sans-serif" font-size="13" letter-spacing="0">一</tspan><tspan x="218" font-family="'Noto Sans CJK SC',sans-serif" font-size="13" letter-spacing="0">共</tspan><tspan x="231" font-family="'Noto Sans CJK SC',sans-serif" font-size="13" letter-spacing="0">选</tspan><tspan x="244" font-family="'Noto Sans CJK SC',sans-serif" font-size="13" letter-spacing="0">择</tspan><tspan x="257" font-family="'Noto Sans CJK SC',sans-serif" font-size="13" letter-spacing="0">了</tspan><tspan x="270">:17</tspan><tspan x="291" font-family="'Noto Sans CJK SC',sans-serif" font-size="13" letter-spacing="0">个</tspan><tspan x="304" font-family="'Noto Sans CJK SC',sans-serif" font-size="13" letter-spacing="0">对</tspan><tspan x="317" font-family="'Noto Sans CJK SC',sans-serif" font-size="13" letter-spacing="0">象</tspan><tspan x="330" font-family="'Noto Sans CJK SC',sans-serif" font-size="13" letter-spacing="0">】</tspan><tspan x="343">,     </tspan><tspan x="385" font-family="'Noto Sans CJK SC',sans-serif" font-size="13" letter-spacing="0">【</tspan><tspan x="398" font-family="'Noto Sans CJK SC',sans-serif" font-size="13" letter-spacing="0">周</tspan><tspan x="411" font-family="'Noto Sans CJK SC',sans-serif" font-size="13" letter-spacing="0">长</tspan><tspan x="424" font-family="'Noto Sans CJK SC',sans-serif" font-size="13" letter-spacing="0">合</tspan><tspan x="437" font-family="'Noto Sans CJK SC',sans-serif" font-size="13" letter-spacing="0">计</tspan><tspan x="450" font-family="'Noto Sans CJK SC',sans-serif" font-size="13" letter-spacing="0">】</tspan><tspan x="465.5" font-family="'Noto Sans CJK SC',sans-serif" font-size="13" letter-spacing="0">：</tspan><tspan x="476"> 0.00000 </tspan><tspan x="539" font-family="'Noto Sans CJK SC',sans-serif" font-size="13" letter-spacing="0">米</tspan><tspan x="552">,    </tspan><tspan x="587" font-family="'Noto Sans CJK SC',sans-serif" font-size="13" letter-spacing="0">【</tspan><tspan x="600" font-family="'Noto Sans CJK SC',sans-serif" font-size="13" letter-spacing="0">面</tspan><tspan x="613" font-family="'Noto Sans CJK SC',sans-serif" font-size="13" letter-spacing="0">积</tspan><tspan x="626" font-family="'Noto Sans CJK SC',sans-serif" font-size="13" letter-spacing="0">合</tspan><tspan x="639" font-family="'Noto Sans CJK SC',sans-serif" font-size="13" letter-spacing="0">计</tspan><tspan x="652" font-family="'Noto Sans CJK SC',sans-serif" font-size="13" letter-spacing="0">】</tspan><tspan x="667.5" font-family="'Noto Sans CJK SC',sans-serif" font-size="13" letter-spacing="0">：</tspan><tspan x="678">0.00000 M²    </tspan><tspan x="776" font-family="'Noto Sans CJK SC',sans-serif" font-size="13" letter-spacing="0">【</tspan><tspan x="789" font-family="'Noto Sans CJK SC',sans-serif" font-size="13" letter-spacing="0">标</tspan><tspan x="802" font-family="'Noto Sans CJK SC',sans-serif" font-size="13" letter-spacing="0">注</tspan><tspan x="815" font-family="'Noto Sans CJK SC',sans-serif" font-size="13" letter-spacing="0">合</tspan><tspan x="828" font-family="'Noto Sans CJK SC',sans-serif" font-size="13" letter-spacing="0">计</tspan><tspan x="841" font-family="'Noto Sans CJK SC',sans-serif" font-size="13" letter-spacing="0">】</tspan><tspan x="856.5" font-family="'Noto Sans CJK SC',sans-serif" font-size="13" letter-spacing="0">：</tspan><tspan x="867">0</tspan></text>
<text x="179" y="826" xml:space="preserve"><tspan x="179"> -------------------------&gt;&gt;&gt;&gt;</tspan><tspan x="389" font-family="'Noto Sans CJK SC',sans-serif" font-size="13" letter-spacing="0">共</tspan><tspan x="402" font-family="'Noto Sans CJK SC',sans-serif" font-size="13" letter-spacing="0">选</tspan><tspan x="415" font-family="'Noto Sans CJK SC',sans-serif" font-size="13" letter-spacing="0">择</tspan><tspan x="428" font-family="'Noto Sans CJK SC',sans-serif" font-size="13" letter-spacing="0">到</tspan><tspan x="441">17</tspan><tspan x="455" font-family="'Noto Sans CJK SC',sans-serif" font-size="13" letter-spacing="0">个</tspan><tspan x="468" font-family="'Noto Sans CJK SC',sans-serif" font-size="13" letter-spacing="0">已</tspan><tspan x="481" font-family="'Noto Sans CJK SC',sans-serif" font-size="13" letter-spacing="0">开</tspan><tspan x="494" font-family="'Noto Sans CJK SC',sans-serif" font-size="13" letter-spacing="0">单</tspan><tspan x="507" font-family="'Noto Sans CJK SC',sans-serif" font-size="13" letter-spacing="0">石</tspan><tspan x="520" font-family="'Noto Sans CJK SC',sans-serif" font-size="13" letter-spacing="0">材</tspan><tspan x="533" font-family="'Noto Sans CJK SC',sans-serif" font-size="13" letter-spacing="0">编</tspan><tspan x="546" font-family="'Noto Sans CJK SC',sans-serif" font-size="13" letter-spacing="0">号</tspan><tspan x="559">,</tspan><tspan x="566" font-family="'Noto Sans CJK SC',sans-serif" font-size="13" letter-spacing="0">面</tspan><tspan x="579" font-family="'Noto Sans CJK SC',sans-serif" font-size="13" letter-spacing="0">积</tspan><tspan x="592" font-family="'Noto Sans CJK SC',sans-serif" font-size="13" letter-spacing="0">合</tspan><tspan x="605" font-family="'Noto Sans CJK SC',sans-serif" font-size="13" letter-spacing="0">计</tspan><tspan x="618" font-family="'Noto Sans CJK SC',sans-serif" font-size="13" letter-spacing="0">为</tspan><tspan x="631">:3.12110 M²</tspan></text>
<text x="179" y="841" xml:space="preserve"><tspan x="179" font-family="'Noto Sans CJK SC',sans-serif" font-size="13" letter-spacing="0">共</tspan><tspan x="192" font-family="'Noto Sans CJK SC',sans-serif" font-size="13" letter-spacing="0">选</tspan><tspan x="205" font-family="'Noto Sans CJK SC',sans-serif" font-size="13" letter-spacing="0">择</tspan><tspan x="218" font-family="'Noto Sans CJK SC',sans-serif" font-size="13" letter-spacing="0">到</tspan><tspan x="231">17</tspan><tspan x="245" font-family="'Noto Sans CJK SC',sans-serif" font-size="13" letter-spacing="0">个</tspan><tspan x="258" font-family="'Noto Sans CJK SC',sans-serif" font-size="13" letter-spacing="0">对</tspan><tspan x="271" font-family="'Noto Sans CJK SC',sans-serif" font-size="13" letter-spacing="0">象</tspan></text>
<text x="179" y="856" xml:space="preserve"><tspan x="179" font-family="'Noto Sans CJK SC',sans-serif" font-size="13" letter-spacing="0">命</tspan><tspan x="192" font-family="'Noto Sans CJK SC',sans-serif" font-size="13" letter-spacing="0">令</tspan><tspan x="205">:</tspan></text>
<text x="179" y="871" xml:space="preserve"><tspan x="179" font-family="'Noto Sans CJK SC',sans-serif" font-size="13" letter-spacing="0">命</tspan><tspan x="192" font-family="'Noto Sans CJK SC',sans-serif" font-size="13" letter-spacing="0">令</tspan><tspan x="205">: CH</tspan></text>
<text x="179" y="886" xml:space="preserve"><tspan x="179">PROPERTIES</tspan></text>
</svg>
<svg class="abs" style="left:0;top:0" width="1566" height="58" viewBox="0 0 1566 58">
<defs>
<linearGradient id="tbg" x1="0" y1="0" x2="0" y2="1"><stop offset="0" stop-color="#e8e8e8"/><stop offset="0.5" stop-color="#e4e4e4"/><stop offset="1" stop-color="#e0e0e0"/></linearGradient>
<linearGradient id="ddg" x1="0" y1="0" x2="0" y2="1"><stop offset="0" stop-color="#f4f4f4"/><stop offset="0.42" stop-color="#e6e6e6"/><stop offset="0.46" stop-color="#d4d4d4"/><stop offset="1" stop-color="#dadada"/></linearGradient>
<linearGradient id="pg" x1="0" y1="0" x2="0" y2="1"><stop offset="0" stop-color="#fafafc"/><stop offset="0.45" stop-color="#d4d4e4"/><stop offset="1" stop-color="#fcfcfc"/></linearGradient>
<linearGradient id="pg2" x1="0" y1="0" x2="0" y2="1"><stop offset="0" stop-color="#fcfcfc"/><stop offset="1" stop-color="#d0d0d4"/></linearGradient>
<linearGradient id="clipg" x1="0" y1="0" x2="0" y2="1"><stop offset="0" stop-color="#c4c4bc"/><stop offset="1" stop-color="#8c8c84"/></linearGradient>
</defs>
<rect x="0" y="3.5" width="9" height="23.0" fill="#525252"/><rect x="0" y="3.5" width="1" height="23.0" fill="#6a6a6a"/><rect x="2.6" y="6.5" width="1.5" height="1.2" fill="#181818"/><rect x="2.6" y="8.5" width="1.5" height="1.2" fill="#181818"/><rect x="2.6" y="10.5" width="1.5" height="1.2" fill="#181818"/><rect x="2.6" y="12.5" width="1.5" height="1.2" fill="#181818"/><rect x="2.6" y="14.5" width="1.5" height="1.2" fill="#181818"/><rect x="2.6" y="16.5" width="1.5" height="1.2" fill="#181818"/><rect x="2.6" y="18.5" width="1.5" height="1.2" fill="#181818"/><rect x="2.6" y="20.5" width="1.5" height="1.2" fill="#181818"/><rect x="2.6" y="22.5" width="1.5" height="1.2" fill="#181818"/><rect x="5.2" y="6.5" width="1.5" height="1.2" fill="#181818"/><rect x="5.2" y="8.5" width="1.5" height="1.2" fill="#181818"/><rect x="5.2" y="10.5" width="1.5" height="1.2" fill="#181818"/><rect x="5.2" y="12.5" width="1.5" height="1.2" fill="#181818"/><rect x="5.2" y="14.5" width="1.5" height="1.2" fill="#181818"/><rect x="5.2" y="16.5" width="1.5" height="1.2" fill="#181818"/><rect x="5.2" y="18.5" width="1.5" height="1.2" fill="#181818"/><rect x="5.2" y="20.5" width="1.5" height="1.2" fill="#181818"/><rect x="5.2" y="22.5" width="1.5" height="1.2" fill="#181818"/><rect x="9" y="3.5" width="637" height="23.0" fill="url(#tbg)"/>
<rect x="0" y="26.5" width="1246" height="1.2" fill="#4c4c4c"/>
<rect x="0" y="53.2" width="1215" height="1.2" fill="#4c4c4c"/>
<g transform="translate(12,7)"><path d="M0.7 2.7 H11 L15.3 7 V14.8 H0.7 Z" fill="url(#pg)" stroke="#2a3248" stroke-width="1.3" stroke-linejoin="round"/><path d="M11 2.7 V7 H15.3" fill="#f4f4fa" stroke="#2a3248" stroke-width="1"/></g>
<g transform="translate(35,7)"><path d="M0.7 13 V3.2 H6 L7.4 4.8 H11.2 V7" fill="#ececf4" stroke="#2a3248" stroke-width="1.3" stroke-linejoin="round"/><path d="M0.8 13.3 L4.6 7 H15.6 L11.6 13.3 Z" fill="#9fb6b4" stroke="#2a3248" stroke-width="1.3" stroke-linejoin="round"/></g>
<g transform="translate(58.6,7)"><path d="M0.7 0.8 H13.6 V14.8 H2.2 L0.7 13.3 Z" fill="#586a84" stroke="#2a3248" stroke-width="1.3" stroke-linejoin="round"/><rect x="3" y="1.2" width="8.4" height="6" fill="url(#pg)"/><rect x="4" y="10" width="7.5" height="4.6" fill="#f4f4f4"/><rect x="5.2" y="11" width="1.3" height="2.6" fill="#2a3248"/></g>
<line x1="80.3" y1="6.5" x2="80.3" y2="23.5" stroke="#707070" stroke-width="1.2"/>
<g transform="translate(87,7)"><path d="M3.6 5.5 L4.6 1.2 H11.4 L12.4 5.5" fill="#fff" stroke="#2a3248" stroke-width="1.4" stroke-linejoin="round"/><rect x="0.8" y="5.4" width="14.4" height="7.2" rx="2.2" fill="url(#pg2)" stroke="#2a3248" stroke-width="1.5"/><path d="M3.8 10.8 H12.2 V14.9 H3.8 Z" fill="#fff" stroke="#2a3248" stroke-width="1.4" stroke-linejoin="round"/><rect x="5" y="12.2" width="6" height="1.3" fill="#8aa4ba"/><line x1="2" y1="10.3" x2="14" y2="10.3" stroke="#405858" stroke-width="1"/></g>
<g transform="translate(111,7)"><path d="M0.8 12 V0.8 H9.5 L13.5 4.8 V9" fill="url(#pg)" stroke="#2a3248" stroke-width="1.3" stroke-linejoin="round"/><path d="M0.8 12 H4" stroke="#2a3248" stroke-width="1.3"/><path d="M9.5 0.8 V4.8 H13.5" fill="#e8ecf4" stroke="#7080a0" stroke-width="1"/><line x1="10.309999999999999" y1="11.91" x2="12.61" y2="14.21" stroke="#2a3248" stroke-width="2" stroke-linecap="round"/><circle cx="8" cy="9.6" r="3.3" fill="#dcecec" stroke="#2a3248" stroke-width="1.3"/></g>
<g transform="translate(133,7)"><path d="M2.8 4.8 L3.6 1 H9.6 L10.4 4.8" fill="#fff" stroke="#2a3248" stroke-width="1.3" stroke-linejoin="round"/><rect x="0.7" y="4.6" width="11.8" height="6.4" rx="1.8" fill="url(#pg2)" stroke="#2a3248" stroke-width="1.4"/><path d="M3 9.4 H10 V13 H3 Z" fill="#fff" stroke="#2a3248" stroke-width="1.3"/><rect x="4.3" y="10.6" width="4" height="1.2" fill="#8aa4ba"/><path d="M9 11.4 H12.4 V9.4 L16.6 13 L12.4 16.6 V14.6 H9 Z" fill="#1560c8" stroke="#0a3c90" stroke-width="0.6"/></g>
<g transform="translate(156,7)"><path d="M5.6 2.6 L0.8 5.2 V12.6 L7.8 16 L15 12.8 V9.5" fill="none" stroke="#2a3248" stroke-width="1.3" stroke-linejoin="round"/><path d="M8.4 12.5 L14.6 9.8 V12.4 L8.4 15.4 Z" fill="#e4e4f0"/><circle cx="10.8" cy="5.6" r="5.2" fill="#70bce8" stroke="#3868b0" stroke-width="0.9"/><path d="M6.5 3.2 Q10.5 6.8 14.8 2.6 M9 0.8 Q8 6 10.4 10.6 M13.2 1.4 Q11.6 6.4 15 8.6" fill="none" stroke="#e07020" stroke-width="1.2"/><circle cx="9" cy="4.6" r="0.9" fill="#ffee00"/><circle cx="12.8" cy="7.6" r="0.9" fill="#ffee00"/><circle cx="10.4" cy="8.6" r="0.8" fill="#ffee00"/><circle cx="10.4" cy="1" r="0.9" fill="#f01010"/><circle cx="8.6" cy="3" r="0.8" fill="#f01010"/></g>
<line x1="178.4" y1="6.5" x2="178.4" y2="23.5" stroke="#707070" stroke-width="1.2"/>
<g transform="translate(185,7)"><path d="M1.2 0.6 L3.4 0.6 L12 11.2 L10.2 12.6 Z" fill="#fff" stroke="#2a3248" stroke-width="0.9" stroke-linejoin="round"/><path d="M14.8 0.6 L12.6 0.6 L4 11.2 L5.8 12.6 Z" fill="#fff" stroke="#2a3248" stroke-width="0.9" stroke-linejoin="round"/><circle cx="8" cy="8.2" r="1.5" fill="#2a3248"/><ellipse cx="2.9" cy="13.4" rx="2" ry="1.6" transform="rotate(-40 2.9 13.4)" fill="#fff" stroke="#2a3248" stroke-width="1.3"/><ellipse cx="13.1" cy="13.4" rx="2" ry="1.6" transform="rotate(40 13.1 13.4)" fill="#fff" stroke="#2a3248" stroke-width="1.3"/></g>
<g transform="translate(208,7)"><path d="M3.6 13.6 H0.7 V0.7 H7.6" fill="#f4f4f8" stroke="#2a3248" stroke-width="1.3"/><path d="M4.7 2.8 H11.4 L15.3 6.8 V15.3 H4.7 Z" fill="url(#pg)" stroke="#2a3248" stroke-width="1.3" stroke-linejoin="round"/><path d="M11.4 2.8 V6.8 H15.3" fill="#f8f8fc" stroke="#2a3248" stroke-width="1"/></g>
<g transform="translate(231.6,7)"><rect x="0.7" y="1.8" width="10.8" height="12" rx="1.4" fill="url(#clipg)" stroke="#2a3248" stroke-width="1.3"/><path d="M3.4 2.2 Q3.4 0.6 6 0.6 Q8.8 0.6 8.8 2.2 Z" fill="#e0e0e0" stroke="#2a3248" stroke-width="1.1"/><path d="M5.8 5.4 H11.8 L14.8 8.4 V15.3 H5.8 Z" fill="url(#pg)" stroke="#2a3248" stroke-width="1.3" stroke-linejoin="round"/><path d="M11.8 5.4 V8.4 H14.8" fill="#f8f8fc" stroke="#2a3248" stroke-width="0.9"/></g>
<g transform="translate(254,7)"><rect x="0.7" y="0.7" width="12.4" height="14.6" rx="1.2" fill="#f0f0f8" stroke="#2a3248" stroke-width="1.3"/><rect x="2.6" y="2.6" width="5.4" height="5.2" fill="#34609c" stroke="#203c70" stroke-width="0.8"/><rect x="9.4" y="2.4" width="1.8" height="5.6" fill="#a0a8b4"/><path d="M3.6 11.2 L5 10 M3.6 11.2 L5 12.4" stroke="#2a3248" stroke-width="0.9" fill="none"/><path d="M5.4 11.4 L10.6 9.4 L13.2 11.8 L11.6 15 L8.4 14.6 Z" fill="#b4601c" stroke="#7c3c0c" stroke-width="0.6"/><path d="M11.2 9.8 L14.8 7.4 L16 8.6 L13.2 11.6 Z" fill="#c87830" stroke="#7c3c0c" stroke-width="0.6"/></g>
<g transform="translate(277,7)"><path d="M1.6 12.4 V5.6 H10" fill="none" stroke="#2a3248" stroke-width="1.3"/><path d="M2.4 6.4 H11.4 V11.6 H2.4 Z" fill="#e0e0f0"/><path d="M1.6 13.2 H9.2" stroke="#305858" stroke-width="1.3"/><rect x="0.6" y="11.8" width="2.6" height="2.8" fill="#fff" stroke="#2a3248" stroke-width="1.1"/><circle cx="12.2" cy="12.6" r="3.1" fill="#e4f0f0" stroke="#386060" stroke-width="1.2"/><path d="M11.8 12.8 V10.6 M11.8 12.8 H10" stroke="#a0a8b0" stroke-width="1"/><path d="M12.6 0.4 L15.6 0.6 L14.2 3 L16.6 3.4 L11.6 8 L12.8 4.8 L10.6 4.6 Z" fill="#f8a020" stroke="#e07010" stroke-width="0.5"/><circle cx="13.6" cy="4" r="1" fill="#ffee20"/></g>
<line x1="299.4" y1="6.5" x2="299.4" y2="23.5" stroke="#707070" stroke-width="1.2"/>
<g transform="translate(306.5,7)"><path d="M0.8 7.6 L6.4 2 V5.2 H11.2 Q15 5.2 15 9 V13.6 H12.4 V10 Q12.4 8.4 10.8 8.4 H6.4 V13 H5.8 Z" fill="#fff" stroke="#2a3248" stroke-width="1.4" stroke-linejoin="round"/></g>
<g transform="translate(342.5,7)"><path d="M15.2 7.6 L9.6 2 V5.2 H4.8 Q1 5.2 1 9 V13.6 H3.6 V10 Q3.6 8.4 5.2 8.4 H9.6 V13 H10.2 Z" fill="#e4eef8" stroke="#7c86a8" stroke-width="1.3" stroke-linejoin="round"/></g>
<line x1="377.6" y1="6.5" x2="377.6" y2="23.5" stroke="#707070" stroke-width="1.2"/>
<g transform="translate(384,7)"><path d="M4.6 9 L2.4 7.2 Q1.2 6.6 0.8 7.6 Q0.8 8.6 2 9.8 L5.6 14.6 Q6.4 15.6 8 15.6 H10.4 Q12 15.6 12.6 14 L15 6.6 Q15.4 5 14.4 4.8 Q13.6 4.8 13.2 5.8 L12.4 7.8 L12.2 2.6 Q12.2 1.4 11.2 1.4 Q10.2 1.4 10.2 2.6 V7 L9.4 1.8 Q9.2 0.6 8.2 0.8 Q7.4 1 7.4 2.2 L7.6 7.2 L6 2.6 Q5.6 1.6 4.8 1.8 Q4 2.2 4.2 3.4 Z" fill="#f4f4fa" stroke="#2a3248" stroke-width="1.3" stroke-linejoin="round"/></g>
<g transform="translate(407,7)"><circle cx="5.6" cy="5.6" r="5" fill="#dcdcea" stroke="#2a3248" stroke-width="1.3"/><path d="M5.2 2.4 V6 H8.6" fill="none" stroke="#2a3248" stroke-width="1.3"/><line x1="12.71" y1="12.509999999999998" x2="15.010000000000002" y2="14.809999999999999" stroke="#2a3248" stroke-width="2" stroke-linecap="round"/><circle cx="10.4" cy="10.2" r="3.3" fill="#dcecec" stroke="#2a3248" stroke-width="1.3"/></g>
<g transform="translate(430.2,7)"><rect x="0.8" y="0.8" width="10.8" height="10.6" rx="0.8" fill="#e8e8e8" stroke="#2a3248" stroke-width="1.4"/><circle cx="10" cy="10.2" r="3.3" fill="#dcecec" stroke="#2a3248" stroke-width="1.3"/><path d="M12.4 16.4 H16.4 V12.4 Z" fill="#000"/></g>
<g transform="translate(453,7)"><path d="M0.8 4.4 L4.8 0.6 V2.6 H8.8 V6.4 H4.8 V8.4 Z" fill="#8494ac" stroke="#2a3248" stroke-width="1.1" stroke-linejoin="round"/><line x1="12.91" y1="12.509999999999998" x2="15.21" y2="14.809999999999999" stroke="#2a3248" stroke-width="2" stroke-linecap="round"/><circle cx="10.6" cy="10.2" r="3.3" fill="#dcecec" stroke="#2a3248" stroke-width="1.3"/></g>
<line x1="475.7" y1="6.5" x2="475.7" y2="23.5" stroke="#707070" stroke-width="1.2"/>
<g transform="translate(483,7)"><rect x="0.7" y="0.7" width="11.8" height="14.6" rx="1.2" fill="#f0f0f8" stroke="#2a3248" stroke-width="1.3"/><rect x="2.6" y="2.6" width="5.4" height="5.2" fill="#34609c" stroke="#203c70" stroke-width="0.8"/><rect x="9.2" y="2.4" width="1.8" height="5.6" fill="#a0a8b4"/><path d="M3 11.6 H10.4 M3 11.6 L4.8 10 M3 11.6 L4.8 13.2" stroke="#2a3248" stroke-width="1" fill="none"/></g>
<g transform="translate(505,7)"><rect x="0.7" y="0.7" width="15" height="14.6" rx="1.2" fill="#f0f0f8" stroke="#2a3248" stroke-width="1.4"/><line x1="5.4" y1="0.7" x2="5.4" y2="15.3" stroke="#2a3248" stroke-width="1.3"/><path d="M2 3.6 H4 M2 9.6 H4" stroke="#2a3248" stroke-width="1.1"/><path d="M3.2 5.6 v1 M3.2 7.4 v1 M3.2 11.6 v1 M3.2 13.4 v0.8" stroke="#2a3248" stroke-width="0.9"/><g fill="#e8e8f4" stroke="#2c4870" stroke-width="1"><rect x="7.4" y="2.6" width="2.4" height="2.4"/><rect x="11.4" y="2.6" width="2.4" height="2.4"/><rect x="7.4" y="6.6" width="2.4" height="2.4"/><rect x="11.4" y="6.6" width="2.4" height="2.4"/></g><rect x="8.4" y="11" width="4.4" height="3" fill="#9098a8" stroke="#344a4a" stroke-width="1"/></g>
<g transform="translate(530,7)"><rect x="0.7" y="0.7" width="9.6" height="14.6" rx="1.2" fill="#f0f0f4" stroke="#344a4a" stroke-width="1.4"/><rect x="9.6" y="5.8" width="1.8" height="3.8" fill="#fff" stroke="#344a4a" stroke-width="1"/><g fill="#a0a0a0"><rect x="2.6" y="3" width="1.9" height="1.9"/><rect x="5.8" y="3" width="1.9" height="1.9"/><rect x="2.6" y="6" width="1.9" height="1.9"/><rect x="5.8" y="6" width="1.9" height="1.9"/><rect x="2.6" y="9" width="1.9" height="1.9"/><rect x="5.8" y="9" width="1.9" height="1.9"/><rect x="2.6" y="12" width="1.9" height="1.9"/><rect x="5.8" y="12" width="1.9" height="1.9"/></g></g>
<g transform="translate(551,7)"><path d="M0.8 6.6 L5.4 5 L11.4 11.4 L3.6 11.8 Z" fill="#c8d8dc" stroke="#405058" stroke-width="0.9"/><path d="M4.6 3.4 Q6 1.2 8 2.2 L15.4 8.6 Q16.4 10.6 14.8 11.8 Q13.4 12.4 12.4 11.4 Z" fill="#f0f0f4" stroke="#405058" stroke-width="1.1"/><ellipse cx="14" cy="10.2" rx="1.6" ry="2" transform="rotate(-35 14 10.2)" fill="#a8c4c0" stroke="#405058" stroke-width="0.9"/><path d="M1.4 8.4 L5 11.6 M2.6 7.6 L6.4 11.2" stroke="#405058" stroke-width="0.7"/><line x1="0.6" y1="13.8" x2="13.6" y2="13.8" stroke="#304048" stroke-width="1.4"/><line x1="0.6" y1="12.2" x2="4" y2="12.2" stroke="#90a8c0" stroke-width="1"/></g>
<g transform="translate(574,7)"><path d="M1.6 5.6 Q0 3.4 2 1.8 Q3.4 0 5.6 1.4 Q7.6 0 9.4 1.6 M1.6 5.6 Q0.2 7.6 1.8 9.2 Q1 11.6 3 12.6 M3.6 15 H5.6 M9.4 1.6 Q9.8 3.6 11.4 4.6 M12.6 2.6 H14.2 V3.6 M15 5.6 V7.6" fill="none" stroke="#2a3248" stroke-width="1.3" stroke-dasharray="2.2 1"/><path d="M2 2.4 Q5.6 1 9 2.4 L10.6 5 L7 8.6 L3 8.4 Z" fill="#dcdce8" opacity="0.8"/><rect x="7.6" y="9.2" width="8" height="6.2" rx="0.8" fill="#d4e4ec" stroke="#2c5454" stroke-width="1.3"/><rect x="7.6" y="9.2" width="8" height="1.6" fill="#2c5454"/><path d="M9 12.2 h1 M11 12.2 h3.4 M9 13.8 h1 M11 13.8 h3.4" stroke="#5078a0" stroke-width="0.9"/></g>
<g transform="translate(599,7)"><rect x="0.7" y="1.4" width="9.8" height="13.6" rx="1.2" fill="#f2f2f8" stroke="#2a3248" stroke-width="1.4"/><rect x="2.4" y="3.2" width="6.4" height="2.6" fill="#6c7488"/><g fill="#2a3248"><rect x="2.6" y="7.6" width="1.3" height="1.3"/><rect x="5" y="7.6" width="1.3" height="1.3"/><rect x="7.4" y="7.6" width="1.3" height="1.3"/><rect x="2.6" y="9.8" width="1.3" height="1.3"/><rect x="5" y="9.8" width="1.3" height="1.3"/><rect x="7.4" y="9.8" width="1.3" height="1.3"/><rect x="2.6" y="12" width="1.3" height="1.3"/><rect x="5" y="12" width="1.3" height="1.3"/><rect x="7.4" y="12" width="1.3" height="1.3"/></g></g>
<line x1="619.4" y1="6.5" x2="619.4" y2="23.5" stroke="#707070" stroke-width="1.2"/>
<g transform="translate(627,7)"><rect x="0.7" y="2.2" width="12.6" height="12.4" rx="0.8" fill="#f4f4fa" stroke="#2a3248" stroke-width="1.3"/><text x="7" y="13" text-anchor="middle" font-family="'Liberation Sans',sans-serif" font-weight="bold" font-size="11.5" fill="#2a3248">?</text></g>
<path d="M329.6 13 h5.8 l-2.9 3.3 Z" fill="#000"/><path d="M365.6 13 h5.8 l-2.9 3.3 Z" fill="#9a9a9a"/>
<rect x="648" y="3.5" width="9" height="23.0" fill="#525252"/><rect x="648" y="3.5" width="1" height="23.0" fill="#6a6a6a"/><rect x="650.6" y="6.5" width="1.5" height="1.2" fill="#181818"/><rect x="650.6" y="8.5" width="1.5" height="1.2" fill="#181818"/><rect x="650.6" y="10.5" width="1.5" height="1.2" fill="#181818"/><rect x="650.6" y="12.5" width="1.5" height="1.2" fill="#181818"/><rect x="650.6" y="14.5" width="1.5" height="1.2" fill="#181818"/><rect x="650.6" y="16.5" width="1.5" height="1.2" fill="#181818"/><rect x="650.6" y="18.5" width="1.5" height="1.2" fill="#181818"/><rect x="650.6" y="20.5" width="1.5" height="1.2" fill="#181818"/><rect x="650.6" y="22.5" width="1.5" height="1.2" fill="#181818"/><rect x="653.2" y="6.5" width="1.5" height="1.2" fill="#181818"/><rect x="653.2" y="8.5" width="1.5" height="1.2" fill="#181818"/><rect x="653.2" y="10.5" width="1.5" height="1.2" fill="#181818"/><rect x="653.2" y="12.5" width="1.5" height="1.2" fill="#181818"/><rect x="653.2" y="14.5" width="1.5" height="1.2" fill="#181818"/><rect x="653.2" y="16.5" width="1.5" height="1.2" fill="#181818"/><rect x="653.2" y="18.5" width="1.5" height="1.2" fill="#181818"/><rect x="653.2" y="20.5" width="1.5" height="1.2" fill="#181818"/><rect x="653.2" y="22.5" width="1.5" height="1.2" fill="#181818"/><rect x="657" y="3.5" width="589" height="23.0" fill="url(#tbg)"/>
<rect x="657" y="4" width="22.5" height="22" rx="2" fill="#ececec" stroke="#f6f6f6" stroke-width="1"/>
<rect x="804.5" y="4" width="22.5" height="22" rx="2" fill="#ececec" stroke="#f6f6f6" stroke-width="1"/>
<rect x="953.5" y="4" width="22.5" height="22" rx="2" fill="#ececec" stroke="#f6f6f6" stroke-width="1"/>
<rect x="1103" y="4" width="22.5" height="22" rx="2" fill="#ececec" stroke="#f6f6f6" stroke-width="1"/>
<g transform="translate(659,7)"><path d="M0.8 12.8 L5.2 1 H6.8 L11.2 12.8 M2.6 8.4 H9.4" fill="none" stroke="#3a3e48" stroke-width="1.5" stroke-linejoin="miter"/><g transform="translate(6.2,5.4)"><path d="M10 0.6 L6.4 4.8" stroke="#c8802c" stroke-width="1.5" stroke-linecap="round" fill="none"/><path d="M6 3.8 L7.6 5.4 C6.8 8 3.6 9.8 0.2 10 C2.4 8.6 3.2 6.2 5 4.4 Z" fill="#a4581c" stroke="#6c340c" stroke-width="0.4"/><path d="M5.2 4.2 L7.2 6" stroke="#e0a050" stroke-width="0.8"/></g></g>
<rect x="679.5" y="4.0" width="119" height="21.5" rx="3" fill="none" stroke="#8a8a8a" stroke-width="1"/><rect x="680" y="4.5" width="118" height="20.0" rx="2.5" fill="url(#ddg)" stroke="#fcfcfc" stroke-width="1"/>
<text x="698" y="19.3" font-size="12.5" font-family="'Liberation Sans','Noto Sans CJK SC',sans-serif" fill="#000" >黑体</text>
<path d="M787.6 12.6 h7.6 l-3.8 4.2 Z" fill="#000"/>
<line x1="799" y1="4.5" x2="799" y2="25.5" stroke="#fff" stroke-width="1"/><line x1="800" y1="4.5" x2="800" y2="25.5" stroke="#9a9a9a" stroke-width="1"/><line x1="802.5" y1="4.5" x2="802.5" y2="25.5" stroke="#fff" stroke-width="1"/><line x1="803.5" y1="4.5" x2="803.5" y2="25.5" stroke="#9a9a9a" stroke-width="1"/>
<g transform="translate(808,6.6)"><path d="M0.8 9.6 V15.6 M15 9.6 V15.6 M0.8 12.6 H15 M0.8 12.6 L3 11.2 M0.8 12.6 L3 14 M15 12.6 L12.8 11.2 M15 12.6 L12.8 14" fill="none" stroke="#2a3248" stroke-width="1"/><g transform="translate(4.4,-0.6)"><g transform="scale(1.05)"><path d="M10 0.6 L6.4 4.8" stroke="#c8802c" stroke-width="1.5" stroke-linecap="round" fill="none"/><path d="M6 3.8 L7.6 5.4 C6.8 8 3.6 9.8 0.2 10 C2.4 8.6 3.2 6.2 5 4.4 Z" fill="#a4581c" stroke="#6c340c" stroke-width="0.4"/><path d="M5.2 4.2 L7.2 6" stroke="#e0a050" stroke-width="0.8"/></g></g></g>
<rect x="828.5" y="4.0" width="118.39999999999998" height="21.5" rx="3" fill="none" stroke="#8a8a8a" stroke-width="1"/><rect x="829" y="4.5" width="117.39999999999998" height="20.0" rx="2.5" fill="url(#ddg)" stroke="#fcfcfc" stroke-width="1"/>
<text x="847" y="19.3" font-size="12.5" font-family="'Liberation Sans','Noto Sans CJK SC',sans-serif" fill="#000" >标注75</text>
<path d="M937 12.6 h7.6 l-3.8 4.2 Z" fill="#000"/>
<line x1="948" y1="4.5" x2="948" y2="25.5" stroke="#fff" stroke-width="1"/><line x1="949" y1="4.5" x2="949" y2="25.5" stroke="#9a9a9a" stroke-width="1"/><line x1="951.5" y1="4.5" x2="951.5" y2="25.5" stroke="#fff" stroke-width="1"/><line x1="952.5" y1="4.5" x2="952.5" y2="25.5" stroke="#9a9a9a" stroke-width="1"/>
<g transform="translate(957,7.6)"><rect x="0.7" y="1" width="11.6" height="11" rx="0.8" fill="#f4f4f8" stroke="#404858" stroke-width="1.2"/><rect x="0.7" y="1" width="11.6" height="2.4" fill="#687084"/><path d="M0.7 6 H12.3 M0.7 8.8 H12.3 M4.4 3.4 V12 M8.4 3.4 V12" stroke="#606878" stroke-width="0.9"/><g transform="translate(5.6,5.4)"><path d="M10 0.6 L6.4 4.8" stroke="#c8802c" stroke-width="1.5" stroke-linecap="round" fill="none"/><path d="M6 3.8 L7.6 5.4 C6.8 8 3.6 9.8 0.2 10 C2.4 8.6 3.2 6.2 5 4.4 Z" fill="#a4581c" stroke="#6c340c" stroke-width="0.4"/><path d="M5.2 4.2 L7.2 6" stroke="#e0a050" stroke-width="0.8"/></g></g>
<rect x="977.5" y="4.0" width="118.59999999999991" height="21.5" rx="3" fill="none" stroke="#8a8a8a" stroke-width="1"/><rect x="978" y="4.5" width="117.59999999999991" height="20.0" rx="2.5" fill="url(#ddg)" stroke="#fcfcfc" stroke-width="1"/>
<text x="982.6" y="19.3" font-size="12.5" font-family="'Liberation Sans','Noto Sans CJK SC',sans-serif" fill="#000" >Standard</text>
<path d="M1085.8 12.6 h7.6 l-3.8 4.2 Z" fill="#000"/>
<line x1="1097.4" y1="4.5" x2="1097.4" y2="25.5" stroke="#fff" stroke-width="1"/><line x1="1098.4" y1="4.5" x2="1098.4" y2="25.5" stroke="#9a9a9a" stroke-width="1"/><line x1="1100.9" y1="4.5" x2="1100.9" y2="25.5" stroke="#fff" stroke-width="1"/><line x1="1101.9" y1="4.5" x2="1101.9" y2="25.5" stroke="#9a9a9a" stroke-width="1"/>
<g transform="translate(1106,6.6)"><circle cx="10.4" cy="3.6" r="3.2" fill="#ececf4" stroke="#606878" stroke-width="1.2"/><path d="M8 5.8 L3.6 8.2 L1.6 14" fill="none" stroke="#2a3248" stroke-width="1.2"/><path d="M0.4 10.8 L1.4 15 L4 11.6 Z" fill="#2a3248"/><g transform="translate(5.6,5.2)"><path d="M10 0.6 L6.4 4.8" stroke="#c8802c" stroke-width="1.5" stroke-linecap="round" fill="none"/><path d="M6 3.8 L7.6 5.4 C6.8 8 3.6 9.8 0.2 10 C2.4 8.6 3.2 6.2 5 4.4 Z" fill="#a4581c" stroke="#6c340c" stroke-width="0.4"/><path d="M5.2 4.2 L7.2 6" stroke="#e0a050" stroke-width="0.8"/></g></g>
<rect x="1126.5" y="4.0" width="119.40000000000009" height="21.5" rx="3" fill="none" stroke="#8a8a8a" stroke-width="1"/><rect x="1127" y="4.5" width="118.40000000000009" height="20.0" rx="2.5" fill="url(#ddg)" stroke="#fcfcfc" stroke-width="1"/>
<text x="1145.6" y="19.3" font-size="12.5" font-family="'Liberation Sans','Noto Sans CJK SC',sans-serif" fill="#000" >Standard</text>
<path d="M1235 12.6 h7.6 l-3.8 4.2 Z" fill="#000"/>
<rect x="0" y="30.8" width="9" height="22.400000000000002" fill="#525252"/><rect x="0" y="30.8" width="1" height="22.400000000000002" fill="#6a6a6a"/><rect x="2.6" y="33.8" width="1.5" height="1.2" fill="#181818"/><rect x="2.6" y="35.8" width="1.5" height="1.2" fill="#181818"/><rect x="2.6" y="37.8" width="1.5" height="1.2" fill="#181818"/><rect x="2.6" y="39.8" width="1.5" height="1.2" fill="#181818"/><rect x="2.6" y="41.8" width="1.5" height="1.2" fill="#181818"/><rect x="2.6" y="43.8" width="1.5" height="1.2" fill="#181818"/><rect x="2.6" y="45.8" width="1.5" height="1.2" fill="#181818"/><rect x="2.6" y="47.8" width="1.5" height="1.2" fill="#181818"/><rect x="5.2" y="33.8" width="1.5" height="1.2" fill="#181818"/><rect x="5.2" y="35.8" width="1.5" height="1.2" fill="#181818"/><rect x="5.2" y="37.8" width="1.5" height="1.2" fill="#181818"/><rect x="5.2" y="39.8" width="1.5" height="1.2" fill="#181818"/><rect x="5.2" y="41.8" width="1.5" height="1.2" fill="#181818"/><rect x="5.2" y="43.8" width="1.5" height="1.2" fill="#181818"/><rect x="5.2" y="45.8" width="1.5" height="1.2" fill="#181818"/><rect x="5.2" y="47.8" width="1.5" height="1.2" fill="#181818"/><rect x="9" y="30.8" width="221" height="22.400000000000002" fill="url(#tbg)"/>
<rect x="9.1" y="31.1" width="174.4" height="21.9" rx="3" fill="none" stroke="#8a8a8a" stroke-width="1"/><rect x="9.6" y="31.6" width="173.4" height="20.4" rx="2.5" fill="url(#ddg)" stroke="#fcfcfc" stroke-width="1"/>
<text x="18" y="46" font-size="12.5" font-family="'Liberation Sans','Noto Sans CJK SC',sans-serif" fill="#000" >AutoCAD 经典</text>
<path d="M172.6 40.2 h7.6 l-3.8 4.2 Z" fill="#000"/>
<g transform="translate(187,34)"><path d="M13.78 6.80 L15.64 7.03 L15.64 8.97 L13.78 9.20 L12.93 11.24 L14.08 12.72 L12.72 14.08 L11.24 12.93 L9.20 13.78 L8.97 15.64 L7.03 15.64 L6.80 13.78 L4.76 12.93 L3.28 14.08 L1.92 12.72 L3.07 11.24 L2.22 9.20 L0.36 8.97 L0.36 7.03 L2.22 6.80 L3.07 4.76 L1.92 3.28 L3.28 1.92 L4.76 3.07 L6.80 2.22 L7.03 0.36 L8.97 0.36 L9.20 2.22 L11.24 3.07 L12.72 1.92 L14.08 3.28 L12.93 4.76 Z" fill="#ececec" stroke="#404a54" stroke-width="1.2" stroke-linejoin="round"/><circle cx="8" cy="8" r="2.6" fill="#e0e0e0" stroke="#404a54" stroke-width="1.2"/></g>
<g transform="translate(210.6,34)"><rect x="1.4" y="1.4" width="13.6" height="13.6" fill="none" stroke="#506070" stroke-width="1.2" stroke-dasharray="2 1.4"/><path d="M3.2 14 V7.2 L8.2 3.2 L13.2 7.2 V14 Z" fill="#a4acb4" stroke="#48525c" stroke-width="1"/></g>
<rect x="232" y="30.8" width="9" height="22.400000000000002" fill="#525252"/><rect x="232" y="30.8" width="1" height="22.400000000000002" fill="#6a6a6a"/><rect x="234.6" y="33.8" width="1.5" height="1.2" fill="#181818"/><rect x="234.6" y="35.8" width="1.5" height="1.2" fill="#181818"/><rect x="234.6" y="37.8" width="1.5" height="1.2" fill="#181818"/><rect x="234.6" y="39.8" width="1.5" height="1.2" fill="#181818"/><rect x="234.6" y="41.8" width="1.5" height="1.2" fill="#181818"/><rect x="234.6" y="43.8" width="1.5" height="1.2" fill="#181818"/><rect x="234.6" y="45.8" width="1.5" height="1.2" fill="#181818"/><rect x="234.6" y="47.8" width="1.5" height="1.2" fill="#181818"/><rect x="237.2" y="33.8" width="1.5" height="1.2" fill="#181818"/><rect x="237.2" y="35.8" width="1.5" height="1.2" fill="#181818"/><rect x="237.2" y="37.8" width="1.5" height="1.2" fill="#181818"/><rect x="237.2" y="39.8" width="1.5" height="1.2" fill="#181818"/><rect x="237.2" y="41.8" width="1.5" height="1.2" fill="#181818"/><rect x="237.2" y="43.8" width="1.5" height="1.2" fill="#181818"/><rect x="237.2" y="45.8" width="1.5" height="1.2" fill="#181818"/><rect x="237.2" y="47.8" width="1.5" height="1.2" fill="#181818"/><rect x="241" y="30.8" width="391" height="22.400000000000002" fill="url(#tbg)"/>
<rect x="241" y="31.2" width="21" height="21.6" rx="2" fill="#ececec" stroke="#f8f8f8" stroke-width="1"/>
<g transform="translate(243.6,34)"><path d="M2 4.6 L6.6 1.4 H14 L9.6 4.6 Z M1.2 7.6 L3.4 6 M9.6 7.6 L14 4.4 M1.2 7.6 H7 M1.2 10.4 L3.4 8.8 M1.2 10.4 H6.4 M1.2 13.2 L3.4 11.6 M1.2 13.2 H6.4" fill="#f4f4f8" stroke="#2a3248" stroke-width="1.1" stroke-linejoin="round"/><rect x="8" y="7.4" width="7" height="8" rx="0.8" fill="#e4ecf4" stroke="#2c4c70" stroke-width="1.2"/><rect x="9.6" y="9" width="3.8" height="2" fill="#fff" stroke="#2c4c70" stroke-width="0.6"/><path d="M10 13.2 h1.4 l-0.6 -0.7 M13 13.2 h-1.4" stroke="#2c4c70" stroke-width="0.7" fill="none"/></g>
<rect x="264.1" y="31.1" width="298.4" height="21.9" rx="3" fill="none" stroke="#8a8a8a" stroke-width="1"/><rect x="264.6" y="31.6" width="297.4" height="20.4" rx="2.5" fill="url(#ddg)" stroke="#fcfcfc" stroke-width="1"/>
<g transform="translate(269.6,34.4)"><path d="M4.4 0.8 Q8 0.8 8 4.6 Q8 6.6 6.4 8.2 V10 H2.6 V8.2 Q0.8 6.6 0.8 4.6 Q0.8 0.8 4.4 0.8 Z" fill="#f6eca4" stroke="#404040" stroke-width="1.1"/><path d="M2.8 11.4 H6.2 M3.2 12.8 H5.8" stroke="#484848" stroke-width="1.2"/></g>
<g transform="translate(283,35.4)"><g stroke="#585848" stroke-width="1.2"><path d="M6.6 0 V13.2 M0 6.6 H13.2 M1.8 1.8 L11.4 11.4 M11.4 1.8 L1.8 11.4"/></g><circle cx="6.6" cy="6.6" r="3.8" fill="#f6ea98" stroke="#585848" stroke-width="1"/></g>
<g transform="translate(300,34.6)"><rect x="0.6" y="0.6" width="7" height="7" fill="#e8e8e8" stroke="#a0a0a0" stroke-width="1.2"/><rect x="2.4" y="2.4" width="3.4" height="3.4" fill="none" stroke="#a8a8a8" stroke-width="1"/><circle cx="8" cy="9" r="3.2" fill="#b8b8b8" stroke="#a0a0a0" stroke-width="1" stroke-dasharray="1.6 1"/><circle cx="8" cy="9" r="1.2" fill="#d8d8d8"/></g>
<g transform="translate(317.6,34.6)"><path d="M5.4 6.6 V3.6 Q5.4 0.8 8.4 0.8 Q11.4 0.8 11.4 3.6 V4.4" fill="none" stroke="#3868b8" stroke-width="1.5"/><rect x="0.8" y="6.4" width="8.4" height="6.6" rx="0.8" fill="#78a8e8" stroke="#2850a0" stroke-width="1.2"/><rect x="4.4" y="8.4" width="1.3" height="2.6" fill="#204080"/></g>
<rect x="334.5" y="37.5" width="9" height="9" fill="#fff" stroke="#000" stroke-width="1"/>
<text x="349" y="46.4" font-size="13" font-family="'Liberation Sans','Noto Sans CJK SC',sans-serif" fill="#000" >tukuang</text>
<path d="M552 40.2 h7.6 l-3.8 4.2 Z" fill="#000"/>
<g transform="translate(566,33.6)"><circle cx="8.6" cy="3" r="2.6" fill="#e8e8f0" stroke="#2a3248" stroke-width="1"/><path d="M1.6 8 L6 4.6 H15.6 L11 8 Z" fill="#78b8f0" stroke="#2060b0" stroke-width="1"/><circle cx="8.6" cy="3.2" r="2.4" fill="#e8e8f0" stroke="#2a3248" stroke-width="1"/><path d="M1.2 10.6 H10.6 L15 7.4 M1.2 13 H10.6 L15 9.8 M1.2 15.4 H10.6 L15 12.2 M1.2 10.6 L2.8 9.4 M1.2 13 L2.8 11.8 M1.2 15.4 L2.8 14.2" fill="none" stroke="#2a3248" stroke-width="1.1"/></g>
<g transform="translate(589.6,33.6)"><path d="M3.6 7.4 L8 4.2 H15.4 L11 7.4 Z M2.4 10.2 H10.6 L15 7 M2.4 12.8 H10.6 L15 9.6 M2.4 15.4 H10.6 L15 12.2 M2.4 10.2 L4 9 M2.4 12.8 L4 11.6 M2.4 15.4 L4 14.2" fill="#f4f4f8" stroke="#2a3248" stroke-width="1.1"/><path d="M0.4 2.6 L3.4 0.4 V1.8 Q6.4 1.8 6.6 4.6" fill="none" stroke="#2a3248" stroke-width="1.1"/><path d="M0.4 2.6 L3.4 0.6 V4.6 Z" fill="#2a3248"/></g>
<g transform="translate(612.4,33.6)"><path d="M2 4.6 L6.6 1.4 H13.6 L9.2 4.6 Z M1.2 7.4 L3.2 6 M1.2 7.4 H7 M9.4 7.2 L13.4 4.4 M1.2 10.2 L3.2 8.8 M1.2 10.2 H6.4 M1.2 13 L3.2 11.6 M1.2 13 H6.4" fill="#f4f4f8" stroke="#2a3248" stroke-width="1.1" stroke-linejoin="round"/><rect x="7.8" y="8.8" width="8" height="6.6" rx="0.8" fill="#d4e4ec" stroke="#2c5454" stroke-width="1.3"/><rect x="7.8" y="8.8" width="8" height="1.6" fill="#2c5454"/><path d="M9.2 12 h1 M11.2 12 h3.2 M9.2 13.6 h1 M11.2 13.6 h3.2" stroke="#5078a0" stroke-width="0.9"/></g>
<rect x="634.5" y="30.8" width="9" height="22.400000000000002" fill="#525252"/><rect x="634.5" y="30.8" width="1" height="22.400000000000002" fill="#6a6a6a"/><rect x="637.1" y="33.8" width="1.5" height="1.2" fill="#181818"/><rect x="637.1" y="35.8" width="1.5" height="1.2" fill="#181818"/><rect x="637.1" y="37.8" width="1.5" height="1.2" fill="#181818"/><rect x="637.1" y="39.8" width="1.5" height="1.2" fill="#181818"/><rect x="637.1" y="41.8" width="1.5" height="1.2" fill="#181818"/><rect x="637.1" y="43.8" width="1.5" height="1.2" fill="#181818"/><rect x="637.1" y="45.8" width="1.5" height="1.2" fill="#181818"/><rect x="637.1" y="47.8" width="1.5" height="1.2" fill="#181818"/><rect x="639.7" y="33.8" width="1.5" height="1.2" fill="#181818"/><rect x="639.7" y="35.8" width="1.5" height="1.2" fill="#181818"/><rect x="639.7" y="37.8" width="1.5" height="1.2" fill="#181818"/><rect x="639.7" y="39.8" width="1.5" height="1.2" fill="#181818"/><rect x="639.7" y="41.8" width="1.5" height="1.2" fill="#181818"/><rect x="639.7" y="43.8" width="1.5" height="1.2" fill="#181818"/><rect x="639.7" y="45.8" width="1.5" height="1.2" fill="#181818"/><rect x="639.7" y="47.8" width="1.5" height="1.2" fill="#181818"/><rect x="643.5" y="30.8" width="571.5" height="22.400000000000002" fill="url(#tbg)"/>
<rect x="642.1" y="31.1" width="149.0" height="21.9" rx="3" fill="none" stroke="#8a8a8a" stroke-width="1"/><rect x="642.6" y="31.6" width="148.0" height="20.4" rx="2.5" fill="url(#ddg)" stroke="#fcfcfc" stroke-width="1"/>
<rect x="648.5" y="37.5" width="9" height="9" fill="#f4f400" stroke="#000" stroke-width="1"/>
<text x="662" y="46.6" font-size="12.5" font-family="'Liberation Sans','Noto Sans CJK SC',sans-serif" fill="#000" >黄</text>
<path d="M781 40.2 h7.6 l-3.8 4.2 Z" fill="#000"/>
<line x1="792" y1="31.4" x2="792" y2="52.6" stroke="#fff" stroke-width="1"/><line x1="793" y1="31.4" x2="793" y2="52.6" stroke="#9a9a9a" stroke-width="1"/><line x1="795.5" y1="31.4" x2="795.5" y2="52.6" stroke="#fff" stroke-width="1"/><line x1="796.5" y1="31.4" x2="796.5" y2="52.6" stroke="#9a9a9a" stroke-width="1"/>
<rect x="798.5" y="31.1" width="158.60000000000002" height="21.9" rx="3" fill="none" stroke="#8a8a8a" stroke-width="1"/><rect x="799" y="31.6" width="157.60000000000002" height="20.4" rx="2.5" fill="url(#ddg)" stroke="#fcfcfc" stroke-width="1"/>
<line x1="803" y1="42.5" x2="863.4" y2="42.5" stroke="#000" stroke-width="1"/>
<text x="868.6" y="46.2" font-size="12" font-family="'Liberation Serif',serif" fill="#000" >ByLayer</text>
<path d="M947 40.2 h7.6 l-3.8 4.2 Z" fill="#000"/>
<line x1="958" y1="31.4" x2="958" y2="52.6" stroke="#fff" stroke-width="1"/><line x1="959" y1="31.4" x2="959" y2="52.6" stroke="#9a9a9a" stroke-width="1"/><line x1="961.5" y1="31.4" x2="961.5" y2="52.6" stroke="#fff" stroke-width="1"/><line x1="962.5" y1="31.4" x2="962.5" y2="52.6" stroke="#9a9a9a" stroke-width="1"/>
<rect x="964.3" y="31.1" width="123.60000000000014" height="21.9" rx="3" fill="none" stroke="#8a8a8a" stroke-width="1"/><rect x="964.8" y="31.6" width="122.60000000000014" height="20.4" rx="2.5" fill="url(#ddg)" stroke="#fcfcfc" stroke-width="1"/>
<line x1="969" y1="42.5" x2="1004" y2="42.5" stroke="#000" stroke-width="1"/>
<text x="1009" y="46.2" font-size="12" font-family="'Liberation Serif',serif" fill="#000" >ByLayer</text>
<path d="M1077.6 40.2 h7.6 l-3.8 4.2 Z" fill="#000"/>
<line x1="1089" y1="31.4" x2="1089" y2="52.6" stroke="#fff" stroke-width="1"/><line x1="1090" y1="31.4" x2="1090" y2="52.6" stroke="#9a9a9a" stroke-width="1"/><line x1="1092.5" y1="31.4" x2="1092.5" y2="52.6" stroke="#fff" stroke-width="1"/><line x1="1093.5" y1="31.4" x2="1093.5" y2="52.6" stroke="#9a9a9a" stroke-width="1"/>
<rect x="1095.6" y="31.6" width="118.40000000000009" height="20.4" rx="1" fill="#e8e8e8" stroke="#fafafa" stroke-width="1"/><path d="M1214.5 31.6 V52.5 H1095.6" fill="none" stroke="#484848" stroke-width="1"/>
<text x="1104.8" y="46" font-size="12" font-family="'Liberation Serif',serif" fill="#707070" >ByColor</text>
<path d="M1204 40.2 h7.6 l-3.8 4.2 Z" fill="#a0a0a0"/>
</svg>
</body></html>
